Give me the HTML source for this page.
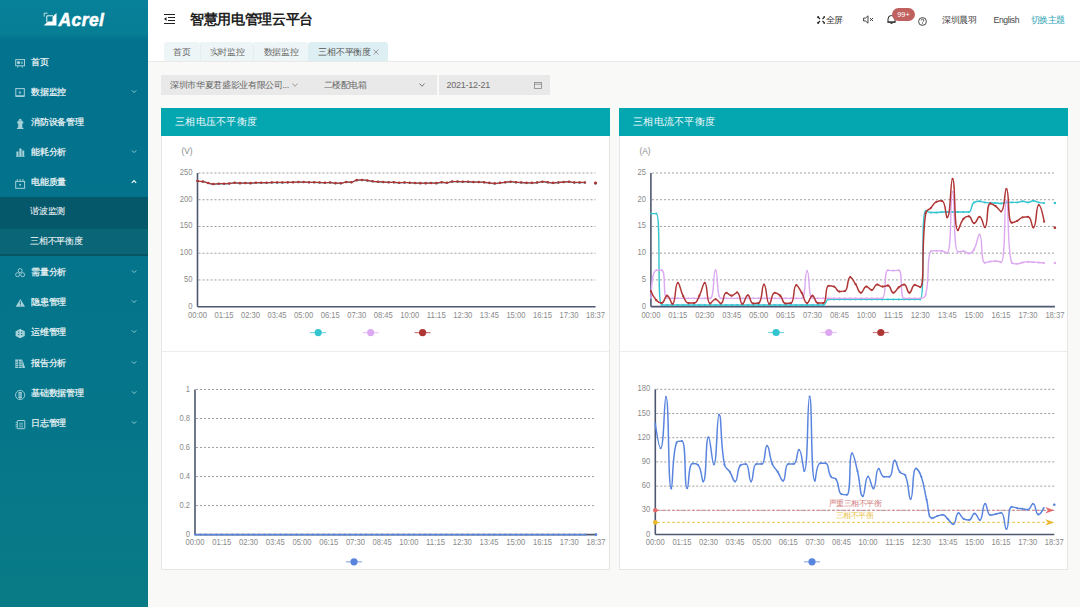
<!DOCTYPE html>
<html><head><meta charset="utf-8">
<style>
*{box-sizing:border-box;margin:0;padding:0}
html,body{width:1080px;height:607px;overflow:hidden;background:#f9f9f7;font-family:"Liberation Sans",sans-serif}
.abs{position:absolute}
#side{position:absolute;left:0;top:0;width:148px;height:607px;background:linear-gradient(180deg,#07809a 0px,#067e94 34px,#03728e 40px,#03728d 120px,#05768a 420px,#087b86 607px)}
.logo{position:absolute;left:43px;top:9.5px;color:#fff;font-weight:bold;font-style:italic;font-size:17.5px;letter-spacing:0.4px;-webkit-text-stroke:0.5px #fff}
.mi{position:absolute;left:0;width:148px;height:30px;color:#f2f8f9;font-size:9px;letter-spacing:-0.2px;line-height:30px;-webkit-text-stroke:0.2px #f2f8f9}
.mi .t{position:absolute;left:31px;top:0.2px}
.mi .ic{position:absolute;left:15px;top:10px;width:10px;height:10px}
.mi .ch{position:absolute;left:131px;top:12px;width:6px;height:5px}
.sub{position:absolute;left:0;width:148px;color:#f6fafb;font-size:9px;letter-spacing:-0.2px;-webkit-text-stroke:0.05px #f6fafb}
.sub .t{position:absolute;left:30px}
#top{position:absolute;left:148px;top:0;width:932px;height:61px;background:#fff}
.title{position:absolute;left:190px;top:11px;font-size:14px;letter-spacing:-0.35px;font-weight:bold;color:#1f1f1f}
.hd{position:absolute;top:14px;font-size:9px;letter-spacing:-0.35px;color:#333;line-height:12px}
.tab{position:absolute;top:41.5px;height:19.5px;border-radius:3px 3px 0 0;background:#eef5f7;font-size:9px;letter-spacing:-0.15px;color:#666;line-height:20px;text-align:center}
.tab.act{background:#ddeff3;color:#555}
#tabline{position:absolute;left:148px;top:61px;width:932px;height:1px;background:#e9e9e9}
.flt{position:absolute;top:74.5px;height:20px;background:#e9e9e9;font-size:9px;letter-spacing:-0.35px;color:#666;line-height:20px}
.panel{position:absolute;top:108px;height:461.5px;background:#fff;border:1px solid #e6e6e6;border-top:none}
.ph{position:absolute;left:-1px;top:0;height:27.5px;background:#04a6b0;color:#f4fbfc;font-size:10px;letter-spacing:0.25px;line-height:28px;padding-left:14px}
.pdiv{position:absolute;left:0;top:243px;height:1px;background:#ececec}
svg text.al{font-size:8.3px;fill:#8a8a8a;font-family:"Liberation Sans",sans-serif}
svg text.ml{font-size:8px;letter-spacing:-0.5px;font-family:"Liberation Sans",sans-serif}
</style></head><body>
<div id="side">
  <div class="logo"><svg width="15" height="15" viewBox="0 0 15 15" style="position:absolute;left:-0.5px;top:2.3px"><path d="M13.5 1V13.6H0.8z" fill="#fff"/><rect x="4.3" y="4.3" width="5.2" height="5.2" fill="#077e95"/><path d="M3.8 10V3.8h6.2" stroke="#fff" stroke-width="0.9" fill="none"/><path d="M1.2 4.5V1.2h3.3" stroke="#fff" stroke-width="0.9" fill="none" opacity="0.8"/></svg><span style="position:absolute;left:15.5px;top:0">Acrel</span></div>
  <div class="sub" style="top:197px;height:32px;background:#05576a;line-height:28.5px"><span class="t">谐波监测</span></div>
  <div class="sub" style="top:229px;height:25px;background:#0a6577;line-height:24px"><span class="t">三相不平衡度</span></div>
  <div class="abs" style="left:0;top:254px;width:148px;height:2px;background:#085664"></div>
  <div class="mi" style="top:47px"><span class="t">首页</span></div>
  <div class="mi" style="top:77px"><span class="t">数据监控</span></div>
  <div class="mi" style="top:107px"><span class="t">消防设备管理</span></div>
  <div class="mi" style="top:137px"><span class="t">能耗分析</span></div>
  <div class="mi" style="top:167px"><span class="t">电能质量</span></div>
  <div class="mi" style="top:257px"><span class="t">需量分析</span></div>
  <div class="mi" style="top:287px"><span class="t">隐患管理</span></div>
  <div class="mi" style="top:317px"><span class="t">运维管理</span></div>
  <div class="mi" style="top:348px"><span class="t">报告分析</span></div>
  <div class="mi" style="top:378px"><span class="t">基础数据管理</span></div>
  <div class="mi" style="top:408px"><span class="t">日志管理</span></div>
  <svg class="abs" style="left:0;top:0" width="148" height="607" viewBox="0 0 148 607">
    <g stroke="#a6d1d9" fill="none" stroke-width="1">
      <!-- home: board -->
      <rect x="15.7" y="59.6" width="8.8" height="6.2"/>
      <path d="M18.3 65.8l-0.8 1.8M21.7 65.8l0.8 1.8" stroke-width="0.9"/>
      <!-- data monitor -->
      <rect x="15.8" y="88.6" width="8.5" height="7.6"/>
      <path d="M15.8 96.1h8.5" stroke-width="1.5"/>
      <!-- calendar -->
      <rect x="15.7" y="181.4" width="8.9" height="6.9"/>
      <path d="M17.3 179v2.4M20.15 179v2.4M23 179v2.4" stroke-width="0.9"/>
      <!-- demand: circles -->
      <circle cx="20.2" cy="270.6" r="2" stroke-width="0.9"/>
      <circle cx="17.6" cy="274.7" r="2" stroke-width="0.9"/>
      <circle cx="22.7" cy="274.7" r="2" stroke-width="0.9"/>
      <!-- base data circle -->
      <circle cx="20.15" cy="395" r="4.6" stroke-width="0.9"/>
      <!-- log book -->
      <rect x="17.3" y="420.5" width="7.5" height="8.2" rx="0.6"/>
      <path d="M19 423.2h4M19 425h4M19 426.8h4" stroke-width="0.7"/>
      <path d="M16.2 422v0.9M16.2 424v0.9M16.2 426v0.9M16.2 428v0.5" stroke-width="1.1"/>
    </g>
    <g fill="#a6d1d9">
      <circle cx="18.6" cy="62.6" r="1.7"/>
      <rect x="21.4" y="61.6" width="1.2" height="2.2"/>
      <path d="M20.6 90.2l-2.3 2.6h1.6l-0.9 2.2 2.6-2.7h-1.6z"/>
      <!-- hydrant -->
      <path d="M18.7 120.2a1.5 1.5 0 0 1 3 0zM18.2 120.6h4.1v7.4h-4.1zM17.2 121.6h1v1.8h-1zM22.3 121.6h1v1.8h-1zM17 127.8h6.5v1.2h-6.5z"/>
      <!-- bars -->
      <path d="M16 156h8.6v0.8h-8.6zM16.4 151.5h2.1v4.5h-2.1zM19.3 148.4h2.3v7.6h-2.3zM22.3 150.5h1.9v5.5h-1.9z"/>
      <circle cx="20.15" cy="184.8" r="0.95"/>
      <!-- warning -->
      <path d="M20.4 298.9L25.1 306.7H15.7z"/>
      <!-- ops globe -->
      <path d="M20.2 328.9l4.6 2.4v4.6l-4.6 2.4-4.6-2.4v-4.6z"/>
      <!-- report -->
      <path d="M15.2 359.6h6.6v8.4h-6.6zM22.3 359.3l2.8 8.6h-2.8z"/>
      <!-- database -->
      <path d="M18.4 392.2q1.75-1 3.5 0v5.8q-1.75 1-3.5 0z"/>
    </g>
    <g stroke="#03728d" fill="none" stroke-width="0.7">
      <path d="M20.4 301.2v3.1M20.4 305.2v0.8" stroke-width="0.9"/>
      <path d="M18.2 332.2h1.4M20.9 332.2h1.4M18.2 334.6h1.4M20.9 334.6h1.4" stroke-width="1"/>
      <path d="M20.2 329v9" stroke="#cfe9ee" stroke-width="0.5"/>
      <path d="M15.2 362h6.6M15.2 364.3h6.6M15.2 366.4h6.6M18.5 359.6v8.4" stroke="#04748a"/>
      <path d="M18.4 394h3.5M18.4 396h3.5" stroke="#05758a" stroke-width="0.6"/>
    </g>
    <g stroke="#8fc9d3" fill="none" stroke-width="1">
      <path d="M131.9 90.4l2.2 2.2 2.2-2.2"/>
      <path d="M131.9 150.4l2.2 2.2 2.2-2.2"/>
      <path d="M131.9 270.4l2.2 2.2 2.2-2.2"/>
      <path d="M131.9 300.4l2.2 2.2 2.2-2.2"/>
      <path d="M131.9 330.4l2.2 2.2 2.2-2.2"/>
      <path d="M131.9 361.4l2.2 2.2 2.2-2.2"/>
      <path d="M131.9 391.4l2.2 2.2 2.2-2.2"/>
      <path d="M131.9 421.4l2.2 2.2 2.2-2.2"/>
    </g>
    <path d="M131.8 182.9l2.2-2.3 2.2 2.3" stroke="#f2f8f9" fill="none" stroke-width="1.2"/>
  </svg>
</div>

<div id="top"></div>
<svg class="abs" style="left:163px;top:13px" width="13" height="12" viewBox="0 0 13 12"><path d="M1 1.5h11M5 4.5h7M5 7.5h7M1 10.5h11" stroke="#222" stroke-width="1.2" fill="none"/><path d="M3.5 4L1 6l2.5 2z" fill="#222"/></svg>
<div class="title">智慧用电管理云平台</div>

<svg class="abs" style="left:816.5px;top:15.5px" width="8.5" height="8" viewBox="0 0 8.5 8"><path d="M1 1l2 2M7.5 1l-2 2M1 7l2-2M7.5 7l-2-2" stroke="#222" stroke-width="1.1"/><path d="M0.2 0.2h2.2L0.2 2.4zM8.3 0.2v2.2L6.1 0.2zM0.2 7.8v-2.2L2.4 7.8zM8.3 7.8h-2.2L8.3 5.6z" fill="#222"/></svg>
<div class="hd" style="left:825.5px">全屏</div>
<svg class="abs" style="left:863px;top:15px" width="11" height="9" viewBox="0 0 11 9"><path d="M0.6 3h2L5 0.8v7.4L2.6 6h-2z" stroke="#333" stroke-width="0.9" fill="none"/><path d="M7 3l3 3M10 3L7 6" stroke="#333" stroke-width="0.9"/></svg>
<svg class="abs" style="left:887px;top:14px" width="9" height="10" viewBox="0 0 9 10"><path d="M1 8V5a3.5 3.5 0 0 1 7 0v3zM0.3 8.2h8.4M3.5 9.3h2" stroke="#222" stroke-width="1" fill="none"/></svg>
<div class="abs" style="left:892px;top:8px;width:23px;height:13px;border-radius:7px;background:#c0605f;color:#fff;font-size:7.4px;line-height:13px;text-align:center">99+</div>
<svg class="abs" style="left:918px;top:16.5px" width="9" height="9" viewBox="0 0 9 9"><circle cx="4.5" cy="4.5" r="3.9" stroke="#333" stroke-width="0.9" fill="none"/><path d="M3.2 3.5a1.3 1.3 0 1 1 1.8 1.2c-.4.2-.5.5-.5.9" stroke="#333" stroke-width="0.8" fill="none"/><circle cx="4.5" cy="6.8" r="0.5" fill="#333"/></svg>
<div class="hd" style="left:942px;color:#444">深圳晨羽</div>
<div class="hd" style="left:993.5px;color:#444;font-size:8.6px">English</div>
<div class="hd" style="left:1030.5px;color:#2ba3b3">切换主题</div>

<div class="tab" style="left:163.5px;width:36px;padding-left:1px">首页</div>
<div class="tab" style="left:199.5px;width:53.5px;padding-left:1px;border-left:1px solid #e4edf0">实时监控</div>
<div class="tab" style="left:253px;width:54.5px;padding-left:1px;border-left:1px solid #e4edf0">数据监控</div>
<div class="tab act" style="left:308px;width:80px;text-align:left;padding-left:10px">三相不平衡度<svg style="position:absolute;left:65.3px;top:7.3px" width="6" height="6" viewBox="0 0 6 6"><path d="M0.5 0.5l5 5M5.5 0.5l-5 5" stroke="#8a8a8a" stroke-width="0.8"/></svg></div>
<div id="tabline"></div>

<div class="flt" style="left:161px;width:276px"><span class="abs" style="left:9px;top:0">深圳市华夏君盛影业有限公司...</span><svg class="abs" style="left:130.5px;top:8px" width="6" height="4" viewBox="0 0 6 4"><path d="M0.5 0.5L3 3.3 5.5 0.5" stroke="#888" fill="none" stroke-width="0.8"/></svg><span class="abs" style="left:162.5px;top:0">二楼配电箱</span><svg class="abs" style="left:258px;top:8px" width="6" height="4" viewBox="0 0 6 4"><path d="M0.5 0.5L3 3.3 5.5 0.5" stroke="#666" fill="none" stroke-width="0.9"/></svg></div>
<div class="flt" style="left:439px;width:110.5px"><span class="abs" style="left:7.5px;top:0;color:#6a6a6a;letter-spacing:-0.25px">2021-12-21</span><svg class="abs" style="left:95px;top:7px" width="8" height="7" viewBox="0 0 8 7"><rect x="0.5" y="0.5" width="7" height="6" stroke="#888" fill="none" stroke-width="0.8"/><path d="M0.5 2.2h7" stroke="#888" stroke-width="0.8"/></svg></div>

<div class="panel" style="left:161px;width:448.5px"><div class="ph" style="width:448.5px">三相电压不平衡度</div><div class="pdiv" style="width:446.5px"></div></div>
<div class="panel" style="left:619px;width:449px"><div class="ph" style="width:449px">三相电流不平衡度</div><div class="pdiv" style="width:447px"></div></div>

<svg class="abs" style="left:0;top:0" width="1080" height="607" viewBox="0 0 1080 607">
<line x1="198.50" y1="173.00" x2="595.50" y2="173.00" stroke="#9c9c9c" stroke-width="1" stroke-dasharray="2 2"/>
<text x="192.50" y="175.00" text-anchor="end" class="al" textLength="12.68" lengthAdjust="spacingAndGlyphs">250</text>
<line x1="198.50" y1="199.74" x2="595.50" y2="199.74" stroke="#9c9c9c" stroke-width="1" stroke-dasharray="2 2"/>
<text x="192.50" y="201.74" text-anchor="end" class="al" textLength="12.68" lengthAdjust="spacingAndGlyphs">200</text>
<line x1="198.50" y1="226.48" x2="595.50" y2="226.48" stroke="#9c9c9c" stroke-width="1" stroke-dasharray="2 2"/>
<text x="192.50" y="228.48" text-anchor="end" class="al" textLength="12.68" lengthAdjust="spacingAndGlyphs">150</text>
<line x1="198.50" y1="253.22" x2="595.50" y2="253.22" stroke="#9c9c9c" stroke-width="1" stroke-dasharray="2 2"/>
<text x="192.50" y="255.22" text-anchor="end" class="al" textLength="12.68" lengthAdjust="spacingAndGlyphs">100</text>
<line x1="198.50" y1="279.96" x2="595.50" y2="279.96" stroke="#9c9c9c" stroke-width="1" stroke-dasharray="2 2"/>
<text x="192.50" y="281.96" text-anchor="end" class="al" textLength="8.45" lengthAdjust="spacingAndGlyphs">50</text>
<text x="192.50" y="308.70" text-anchor="end" class="al" textLength="4.23" lengthAdjust="spacingAndGlyphs">0</text>
<line x1="197.50" y1="173.00" x2="197.50" y2="306.70" stroke="#4d5770" stroke-width="1.6"/>
<line x1="197.50" y1="306.70" x2="595.50" y2="306.70" stroke="#4d5770" stroke-width="1.6"/>
<text x="197.50" y="317.80" text-anchor="middle" class="al" textLength="19.02" lengthAdjust="spacingAndGlyphs">00:00</text>
<text x="224.03" y="317.80" text-anchor="middle" class="al" textLength="19.02" lengthAdjust="spacingAndGlyphs">01:15</text>
<text x="250.57" y="317.80" text-anchor="middle" class="al" textLength="19.02" lengthAdjust="spacingAndGlyphs">02:30</text>
<text x="277.10" y="317.80" text-anchor="middle" class="al" textLength="19.02" lengthAdjust="spacingAndGlyphs">03:45</text>
<text x="303.63" y="317.80" text-anchor="middle" class="al" textLength="19.02" lengthAdjust="spacingAndGlyphs">05:00</text>
<text x="330.17" y="317.80" text-anchor="middle" class="al" textLength="19.02" lengthAdjust="spacingAndGlyphs">06:15</text>
<text x="356.70" y="317.80" text-anchor="middle" class="al" textLength="19.02" lengthAdjust="spacingAndGlyphs">07:30</text>
<text x="383.23" y="317.80" text-anchor="middle" class="al" textLength="19.02" lengthAdjust="spacingAndGlyphs">08:45</text>
<text x="409.77" y="317.80" text-anchor="middle" class="al" textLength="19.02" lengthAdjust="spacingAndGlyphs">10:00</text>
<text x="436.30" y="317.80" text-anchor="middle" class="al" textLength="19.02" lengthAdjust="spacingAndGlyphs">11:15</text>
<text x="462.83" y="317.80" text-anchor="middle" class="al" textLength="19.02" lengthAdjust="spacingAndGlyphs">12:30</text>
<text x="489.37" y="317.80" text-anchor="middle" class="al" textLength="19.02" lengthAdjust="spacingAndGlyphs">13:45</text>
<text x="515.90" y="317.80" text-anchor="middle" class="al" textLength="19.02" lengthAdjust="spacingAndGlyphs">15:00</text>
<text x="542.43" y="317.80" text-anchor="middle" class="al" textLength="19.02" lengthAdjust="spacingAndGlyphs">16:15</text>
<text x="568.97" y="317.80" text-anchor="middle" class="al" textLength="19.02" lengthAdjust="spacingAndGlyphs">17:30</text>
<text x="595.50" y="317.80" text-anchor="middle" class="al" textLength="19.02" lengthAdjust="spacingAndGlyphs">18:37</text>
<text x="187.00" y="153.80" text-anchor="middle" class="al">(V)</text>
<path d="M197.50 181.24 C197.50 181.24 200.19 181.26 202.81 181.72 C205.50 182.19 205.45 182.48 208.11 183.11 C210.75 183.73 210.74 184.23 213.42 184.23 C216.05 184.23 216.07 183.86 218.73 183.86 C221.38 183.86 221.38 183.86 224.03 183.86 C226.69 183.86 226.69 183.82 229.34 183.59 C232.00 183.36 231.99 182.95 234.65 182.95 C237.29 182.95 237.30 183.32 239.95 183.32 C242.60 183.32 242.61 183.11 245.26 183.11 C247.91 183.11 247.92 183.32 250.57 183.32 C253.22 183.32 253.21 182.84 255.87 182.84 C258.52 182.84 258.53 182.84 261.18 182.84 C263.83 182.84 263.83 182.84 266.49 182.84 C269.14 182.84 269.14 182.63 271.79 182.63 C274.45 182.63 274.45 182.63 277.10 182.63 C279.75 182.63 279.75 182.63 282.41 182.63 C285.06 182.63 285.06 182.59 287.71 182.52 C290.37 182.45 290.37 182.44 293.02 182.36 C295.67 182.28 295.67 182.20 298.33 182.20 C300.98 182.20 300.98 182.20 303.63 182.20 C306.29 182.20 306.28 182.47 308.94 182.47 C311.59 182.47 311.59 182.47 314.25 182.47 C316.90 182.47 316.90 182.53 319.55 182.63 C322.21 182.72 322.21 182.84 324.86 182.84 C327.51 182.84 327.52 182.63 330.17 182.63 C332.83 182.63 332.81 183.27 335.47 183.32 C338.12 183.38 338.16 183.38 340.78 183.38 C343.47 183.38 343.40 182.20 346.09 182.20 C348.71 182.20 348.83 182.36 351.39 182.36 C354.14 182.36 353.96 180.56 356.70 180.33 C359.26 180.11 359.36 180.11 362.01 180.11 C364.66 180.11 364.67 180.26 367.31 180.59 C369.98 180.93 369.95 181.13 372.62 181.45 C375.26 181.77 375.27 181.69 377.93 181.88 C380.58 182.06 380.58 182.05 383.23 182.20 C385.89 182.35 385.88 182.47 388.54 182.47 C391.19 182.47 391.20 182.47 393.85 182.47 C396.50 182.47 396.50 182.84 399.15 182.84 C401.80 182.84 401.81 182.63 404.46 182.63 C407.11 182.63 407.11 182.72 409.77 182.84 C412.42 182.96 412.42 182.99 415.07 183.11 C417.73 183.23 417.73 183.32 420.38 183.32 C423.03 183.32 423.03 183.32 425.69 183.32 C428.34 183.32 428.34 183.11 430.99 183.11 C433.65 183.11 433.66 183.32 436.30 183.32 C438.97 183.32 438.94 182.47 441.61 182.47 C444.25 182.47 444.29 182.84 446.91 182.84 C449.59 182.84 449.54 181.72 452.22 181.72 C454.84 181.72 454.87 181.72 457.53 181.72 C460.18 181.72 460.18 181.88 462.83 181.88 C465.49 181.88 465.49 181.88 468.14 181.88 C470.80 181.88 470.79 182.20 473.45 182.20 C476.10 182.20 476.10 182.20 478.75 182.20 C481.41 182.20 481.41 182.21 484.06 182.41 C486.72 182.61 486.71 182.72 489.37 183.00 C492.02 183.28 492.02 183.54 494.67 183.54 C497.33 183.54 497.33 183.28 499.98 183.00 C502.63 182.72 502.63 182.69 505.29 182.41 C507.94 182.13 507.94 181.88 510.59 181.88 C513.25 181.88 513.24 182.22 515.90 182.41 C518.55 182.60 518.56 182.48 521.21 182.63 C523.86 182.77 523.86 183.00 526.51 183.00 C529.16 183.00 529.17 183.00 531.82 183.00 C534.48 183.00 534.48 182.91 537.13 182.63 C539.79 182.34 539.77 181.88 542.43 181.88 C545.08 181.88 545.09 182.13 547.74 182.41 C550.39 182.69 550.39 183.00 553.05 183.00 C555.70 183.00 555.70 182.83 558.35 182.63 C561.01 182.43 561.00 182.39 563.66 182.20 C566.31 182.01 566.32 181.88 568.97 181.88 C571.63 181.88 571.61 182.63 574.27 182.63 C576.91 182.63 576.93 182.63 579.58 182.63 C582.23 182.63 584.89 182.63 584.89 182.63" fill="none" stroke="#33c4cf" stroke-width="1.2" stroke-linejoin="round"/>
<circle cx="197.50" cy="181.24" r="1.1" fill="#33c4cf"/>
<circle cx="202.81" cy="181.72" r="1.1" fill="#33c4cf"/>
<circle cx="208.11" cy="183.11" r="1.1" fill="#33c4cf"/>
<circle cx="213.42" cy="184.23" r="1.1" fill="#33c4cf"/>
<circle cx="218.73" cy="183.86" r="1.1" fill="#33c4cf"/>
<circle cx="224.03" cy="183.86" r="1.1" fill="#33c4cf"/>
<circle cx="229.34" cy="183.59" r="1.1" fill="#33c4cf"/>
<circle cx="234.65" cy="182.95" r="1.1" fill="#33c4cf"/>
<circle cx="239.95" cy="183.32" r="1.1" fill="#33c4cf"/>
<circle cx="245.26" cy="183.11" r="1.1" fill="#33c4cf"/>
<circle cx="250.57" cy="183.32" r="1.1" fill="#33c4cf"/>
<circle cx="255.87" cy="182.84" r="1.1" fill="#33c4cf"/>
<circle cx="261.18" cy="182.84" r="1.1" fill="#33c4cf"/>
<circle cx="266.49" cy="182.84" r="1.1" fill="#33c4cf"/>
<circle cx="271.79" cy="182.63" r="1.1" fill="#33c4cf"/>
<circle cx="277.10" cy="182.63" r="1.1" fill="#33c4cf"/>
<circle cx="282.41" cy="182.63" r="1.1" fill="#33c4cf"/>
<circle cx="287.71" cy="182.52" r="1.1" fill="#33c4cf"/>
<circle cx="293.02" cy="182.36" r="1.1" fill="#33c4cf"/>
<circle cx="298.33" cy="182.20" r="1.1" fill="#33c4cf"/>
<circle cx="303.63" cy="182.20" r="1.1" fill="#33c4cf"/>
<circle cx="308.94" cy="182.47" r="1.1" fill="#33c4cf"/>
<circle cx="314.25" cy="182.47" r="1.1" fill="#33c4cf"/>
<circle cx="319.55" cy="182.63" r="1.1" fill="#33c4cf"/>
<circle cx="324.86" cy="182.84" r="1.1" fill="#33c4cf"/>
<circle cx="330.17" cy="182.63" r="1.1" fill="#33c4cf"/>
<circle cx="335.47" cy="183.32" r="1.1" fill="#33c4cf"/>
<circle cx="340.78" cy="183.38" r="1.1" fill="#33c4cf"/>
<circle cx="346.09" cy="182.20" r="1.1" fill="#33c4cf"/>
<circle cx="351.39" cy="182.36" r="1.1" fill="#33c4cf"/>
<circle cx="356.70" cy="180.33" r="1.1" fill="#33c4cf"/>
<circle cx="362.01" cy="180.11" r="1.1" fill="#33c4cf"/>
<circle cx="367.31" cy="180.59" r="1.1" fill="#33c4cf"/>
<circle cx="372.62" cy="181.45" r="1.1" fill="#33c4cf"/>
<circle cx="377.93" cy="181.88" r="1.1" fill="#33c4cf"/>
<circle cx="383.23" cy="182.20" r="1.1" fill="#33c4cf"/>
<circle cx="388.54" cy="182.47" r="1.1" fill="#33c4cf"/>
<circle cx="393.85" cy="182.47" r="1.1" fill="#33c4cf"/>
<circle cx="399.15" cy="182.84" r="1.1" fill="#33c4cf"/>
<circle cx="404.46" cy="182.63" r="1.1" fill="#33c4cf"/>
<circle cx="409.77" cy="182.84" r="1.1" fill="#33c4cf"/>
<circle cx="415.07" cy="183.11" r="1.1" fill="#33c4cf"/>
<circle cx="420.38" cy="183.32" r="1.1" fill="#33c4cf"/>
<circle cx="425.69" cy="183.32" r="1.1" fill="#33c4cf"/>
<circle cx="430.99" cy="183.11" r="1.1" fill="#33c4cf"/>
<circle cx="436.30" cy="183.32" r="1.1" fill="#33c4cf"/>
<circle cx="441.61" cy="182.47" r="1.1" fill="#33c4cf"/>
<circle cx="446.91" cy="182.84" r="1.1" fill="#33c4cf"/>
<circle cx="452.22" cy="181.72" r="1.1" fill="#33c4cf"/>
<circle cx="457.53" cy="181.72" r="1.1" fill="#33c4cf"/>
<circle cx="462.83" cy="181.88" r="1.1" fill="#33c4cf"/>
<circle cx="468.14" cy="181.88" r="1.1" fill="#33c4cf"/>
<circle cx="473.45" cy="182.20" r="1.1" fill="#33c4cf"/>
<circle cx="478.75" cy="182.20" r="1.1" fill="#33c4cf"/>
<circle cx="484.06" cy="182.41" r="1.1" fill="#33c4cf"/>
<circle cx="489.37" cy="183.00" r="1.1" fill="#33c4cf"/>
<circle cx="494.67" cy="183.54" r="1.1" fill="#33c4cf"/>
<circle cx="499.98" cy="183.00" r="1.1" fill="#33c4cf"/>
<circle cx="505.29" cy="182.41" r="1.1" fill="#33c4cf"/>
<circle cx="510.59" cy="181.88" r="1.1" fill="#33c4cf"/>
<circle cx="515.90" cy="182.41" r="1.1" fill="#33c4cf"/>
<circle cx="521.21" cy="182.63" r="1.1" fill="#33c4cf"/>
<circle cx="526.51" cy="183.00" r="1.1" fill="#33c4cf"/>
<circle cx="531.82" cy="183.00" r="1.1" fill="#33c4cf"/>
<circle cx="537.13" cy="182.63" r="1.1" fill="#33c4cf"/>
<circle cx="542.43" cy="181.88" r="1.1" fill="#33c4cf"/>
<circle cx="547.74" cy="182.41" r="1.1" fill="#33c4cf"/>
<circle cx="553.05" cy="183.00" r="1.1" fill="#33c4cf"/>
<circle cx="558.35" cy="182.63" r="1.1" fill="#33c4cf"/>
<circle cx="563.66" cy="182.20" r="1.1" fill="#33c4cf"/>
<circle cx="568.97" cy="181.88" r="1.1" fill="#33c4cf"/>
<circle cx="574.27" cy="182.63" r="1.1" fill="#33c4cf"/>
<circle cx="579.58" cy="182.63" r="1.1" fill="#33c4cf"/>
<circle cx="584.89" cy="182.63" r="1.1" fill="#33c4cf"/>
<circle cx="595.50" cy="183.21" r="1.1" fill="#33c4cf"/>
<circle cx="595.50" cy="183.21" r="1.3" fill="#33c4cf"/>
<path d="M197.50 181.08 C197.50 181.08 200.19 181.10 202.81 181.56 C205.50 182.03 205.45 182.32 208.11 182.95 C210.75 183.57 210.74 184.07 213.42 184.07 C216.05 184.07 216.07 183.70 218.73 183.70 C221.38 183.70 221.38 183.70 224.03 183.70 C226.69 183.70 226.69 183.66 229.34 183.43 C232.00 183.20 231.99 182.79 234.65 182.79 C237.29 182.79 237.30 183.16 239.95 183.16 C242.60 183.16 242.61 182.95 245.26 182.95 C247.91 182.95 247.92 183.16 250.57 183.16 C253.22 183.16 253.21 182.68 255.87 182.68 C258.52 182.68 258.53 182.68 261.18 182.68 C263.83 182.68 263.83 182.68 266.49 182.68 C269.14 182.68 269.14 182.47 271.79 182.47 C274.45 182.47 274.45 182.47 277.10 182.47 C279.75 182.47 279.75 182.47 282.41 182.47 C285.06 182.47 285.06 182.43 287.71 182.36 C290.37 182.29 290.37 182.28 293.02 182.20 C295.67 182.12 295.67 182.04 298.33 182.04 C300.98 182.04 300.98 182.04 303.63 182.04 C306.29 182.04 306.28 182.31 308.94 182.31 C311.59 182.31 311.59 182.31 314.25 182.31 C316.90 182.31 316.90 182.37 319.55 182.47 C322.21 182.56 322.21 182.68 324.86 182.68 C327.51 182.68 327.52 182.47 330.17 182.47 C332.83 182.47 332.81 183.11 335.47 183.16 C338.12 183.21 338.16 183.21 340.78 183.21 C343.47 183.21 343.40 182.04 346.09 182.04 C348.71 182.04 348.83 182.20 351.39 182.20 C354.14 182.20 353.96 180.40 356.70 180.17 C359.26 179.95 359.36 179.95 362.01 179.95 C364.66 179.95 364.67 180.10 367.31 180.43 C369.98 180.77 369.95 180.97 372.62 181.29 C375.26 181.61 375.27 181.53 377.93 181.72 C380.58 181.90 380.58 181.89 383.23 182.04 C385.89 182.19 385.88 182.31 388.54 182.31 C391.19 182.31 391.20 182.31 393.85 182.31 C396.50 182.31 396.50 182.68 399.15 182.68 C401.80 182.68 401.81 182.47 404.46 182.47 C407.11 182.47 407.11 182.56 409.77 182.68 C412.42 182.80 412.42 182.83 415.07 182.95 C417.73 183.07 417.73 183.16 420.38 183.16 C423.03 183.16 423.03 183.16 425.69 183.16 C428.34 183.16 428.34 182.95 430.99 182.95 C433.65 182.95 433.66 183.16 436.30 183.16 C438.97 183.16 438.94 182.31 441.61 182.31 C444.25 182.31 444.29 182.68 446.91 182.68 C449.59 182.68 449.54 181.56 452.22 181.56 C454.84 181.56 454.87 181.56 457.53 181.56 C460.18 181.56 460.18 181.72 462.83 181.72 C465.49 181.72 465.49 181.72 468.14 181.72 C470.80 181.72 470.79 182.04 473.45 182.04 C476.10 182.04 476.10 182.04 478.75 182.04 C481.41 182.04 481.41 182.05 484.06 182.25 C486.72 182.45 486.71 182.56 489.37 182.84 C492.02 183.12 492.02 183.38 494.67 183.38 C497.33 183.38 497.33 183.12 499.98 182.84 C502.63 182.56 502.63 182.53 505.29 182.25 C507.94 181.97 507.94 181.72 510.59 181.72 C513.25 181.72 513.24 182.06 515.90 182.25 C518.55 182.44 518.56 182.32 521.21 182.47 C523.86 182.61 523.86 182.84 526.51 182.84 C529.16 182.84 529.17 182.84 531.82 182.84 C534.48 182.84 534.48 182.75 537.13 182.47 C539.79 182.18 539.77 181.72 542.43 181.72 C545.08 181.72 545.09 181.97 547.74 182.25 C550.39 182.53 550.39 182.84 553.05 182.84 C555.70 182.84 555.70 182.67 558.35 182.47 C561.01 182.27 561.00 182.23 563.66 182.04 C566.31 181.85 566.32 181.72 568.97 181.72 C571.63 181.72 571.61 182.47 574.27 182.47 C576.91 182.47 576.93 182.47 579.58 182.47 C582.23 182.47 584.89 182.47 584.89 182.47" fill="none" stroke="#b03636" stroke-width="1.3" stroke-linejoin="round"/>
<circle cx="197.50" cy="181.08" r="1.3" fill="#b03636"/>
<circle cx="202.81" cy="181.56" r="1.3" fill="#b03636"/>
<circle cx="208.11" cy="182.95" r="1.3" fill="#b03636"/>
<circle cx="213.42" cy="184.07" r="1.3" fill="#b03636"/>
<circle cx="218.73" cy="183.70" r="1.3" fill="#b03636"/>
<circle cx="224.03" cy="183.70" r="1.3" fill="#b03636"/>
<circle cx="229.34" cy="183.43" r="1.3" fill="#b03636"/>
<circle cx="234.65" cy="182.79" r="1.3" fill="#b03636"/>
<circle cx="239.95" cy="183.16" r="1.3" fill="#b03636"/>
<circle cx="245.26" cy="182.95" r="1.3" fill="#b03636"/>
<circle cx="250.57" cy="183.16" r="1.3" fill="#b03636"/>
<circle cx="255.87" cy="182.68" r="1.3" fill="#b03636"/>
<circle cx="261.18" cy="182.68" r="1.3" fill="#b03636"/>
<circle cx="266.49" cy="182.68" r="1.3" fill="#b03636"/>
<circle cx="271.79" cy="182.47" r="1.3" fill="#b03636"/>
<circle cx="277.10" cy="182.47" r="1.3" fill="#b03636"/>
<circle cx="282.41" cy="182.47" r="1.3" fill="#b03636"/>
<circle cx="287.71" cy="182.36" r="1.3" fill="#b03636"/>
<circle cx="293.02" cy="182.20" r="1.3" fill="#b03636"/>
<circle cx="298.33" cy="182.04" r="1.3" fill="#b03636"/>
<circle cx="303.63" cy="182.04" r="1.3" fill="#b03636"/>
<circle cx="308.94" cy="182.31" r="1.3" fill="#b03636"/>
<circle cx="314.25" cy="182.31" r="1.3" fill="#b03636"/>
<circle cx="319.55" cy="182.47" r="1.3" fill="#b03636"/>
<circle cx="324.86" cy="182.68" r="1.3" fill="#b03636"/>
<circle cx="330.17" cy="182.47" r="1.3" fill="#b03636"/>
<circle cx="335.47" cy="183.16" r="1.3" fill="#b03636"/>
<circle cx="340.78" cy="183.21" r="1.3" fill="#b03636"/>
<circle cx="346.09" cy="182.04" r="1.3" fill="#b03636"/>
<circle cx="351.39" cy="182.20" r="1.3" fill="#b03636"/>
<circle cx="356.70" cy="180.17" r="1.3" fill="#b03636"/>
<circle cx="362.01" cy="179.95" r="1.3" fill="#b03636"/>
<circle cx="367.31" cy="180.43" r="1.3" fill="#b03636"/>
<circle cx="372.62" cy="181.29" r="1.3" fill="#b03636"/>
<circle cx="377.93" cy="181.72" r="1.3" fill="#b03636"/>
<circle cx="383.23" cy="182.04" r="1.3" fill="#b03636"/>
<circle cx="388.54" cy="182.31" r="1.3" fill="#b03636"/>
<circle cx="393.85" cy="182.31" r="1.3" fill="#b03636"/>
<circle cx="399.15" cy="182.68" r="1.3" fill="#b03636"/>
<circle cx="404.46" cy="182.47" r="1.3" fill="#b03636"/>
<circle cx="409.77" cy="182.68" r="1.3" fill="#b03636"/>
<circle cx="415.07" cy="182.95" r="1.3" fill="#b03636"/>
<circle cx="420.38" cy="183.16" r="1.3" fill="#b03636"/>
<circle cx="425.69" cy="183.16" r="1.3" fill="#b03636"/>
<circle cx="430.99" cy="182.95" r="1.3" fill="#b03636"/>
<circle cx="436.30" cy="183.16" r="1.3" fill="#b03636"/>
<circle cx="441.61" cy="182.31" r="1.3" fill="#b03636"/>
<circle cx="446.91" cy="182.68" r="1.3" fill="#b03636"/>
<circle cx="452.22" cy="181.56" r="1.3" fill="#b03636"/>
<circle cx="457.53" cy="181.56" r="1.3" fill="#b03636"/>
<circle cx="462.83" cy="181.72" r="1.3" fill="#b03636"/>
<circle cx="468.14" cy="181.72" r="1.3" fill="#b03636"/>
<circle cx="473.45" cy="182.04" r="1.3" fill="#b03636"/>
<circle cx="478.75" cy="182.04" r="1.3" fill="#b03636"/>
<circle cx="484.06" cy="182.25" r="1.3" fill="#b03636"/>
<circle cx="489.37" cy="182.84" r="1.3" fill="#b03636"/>
<circle cx="494.67" cy="183.38" r="1.3" fill="#b03636"/>
<circle cx="499.98" cy="182.84" r="1.3" fill="#b03636"/>
<circle cx="505.29" cy="182.25" r="1.3" fill="#b03636"/>
<circle cx="510.59" cy="181.72" r="1.3" fill="#b03636"/>
<circle cx="515.90" cy="182.25" r="1.3" fill="#b03636"/>
<circle cx="521.21" cy="182.47" r="1.3" fill="#b03636"/>
<circle cx="526.51" cy="182.84" r="1.3" fill="#b03636"/>
<circle cx="531.82" cy="182.84" r="1.3" fill="#b03636"/>
<circle cx="537.13" cy="182.47" r="1.3" fill="#b03636"/>
<circle cx="542.43" cy="181.72" r="1.3" fill="#b03636"/>
<circle cx="547.74" cy="182.25" r="1.3" fill="#b03636"/>
<circle cx="553.05" cy="182.84" r="1.3" fill="#b03636"/>
<circle cx="558.35" cy="182.47" r="1.3" fill="#b03636"/>
<circle cx="563.66" cy="182.04" r="1.3" fill="#b03636"/>
<circle cx="568.97" cy="181.72" r="1.3" fill="#b03636"/>
<circle cx="574.27" cy="182.47" r="1.3" fill="#b03636"/>
<circle cx="579.58" cy="182.47" r="1.3" fill="#b03636"/>
<circle cx="584.89" cy="182.47" r="1.3" fill="#b03636"/>
<circle cx="595.50" cy="183.05" r="1.3" fill="#b03636"/>
<circle cx="595.50" cy="183.05" r="1.5" fill="#b03636"/>
<line x1="310.2" y1="332.6" x2="326.2" y2="332.6" stroke="#33c4cf" stroke-width="1.2" opacity="0.65"/><circle cx="318.2" cy="332.6" r="3.6" fill="#33c4cf"/><line x1="362.7" y1="332.6" x2="378.7" y2="332.6" stroke="#dca9f1" stroke-width="1.2" opacity="0.65"/><circle cx="370.7" cy="332.6" r="3.6" fill="#dca9f1"/><line x1="414.6" y1="332.6" x2="430.6" y2="332.6" stroke="#b03636" stroke-width="1.2" opacity="0.65"/><circle cx="422.6" cy="332.6" r="3.6" fill="#b03636"/>
<line x1="651.90" y1="173.00" x2="1054.90" y2="173.00" stroke="#9c9c9c" stroke-width="1" stroke-dasharray="2 2"/>
<text x="645.90" y="175.00" text-anchor="end" class="al" textLength="8.45" lengthAdjust="spacingAndGlyphs">25</text>
<line x1="651.90" y1="199.72" x2="1054.90" y2="199.72" stroke="#9c9c9c" stroke-width="1" stroke-dasharray="2 2"/>
<text x="645.90" y="201.72" text-anchor="end" class="al" textLength="8.45" lengthAdjust="spacingAndGlyphs">20</text>
<line x1="651.90" y1="226.44" x2="1054.90" y2="226.44" stroke="#9c9c9c" stroke-width="1" stroke-dasharray="2 2"/>
<text x="645.90" y="228.44" text-anchor="end" class="al" textLength="8.45" lengthAdjust="spacingAndGlyphs">15</text>
<line x1="651.90" y1="253.16" x2="1054.90" y2="253.16" stroke="#9c9c9c" stroke-width="1" stroke-dasharray="2 2"/>
<text x="645.90" y="255.16" text-anchor="end" class="al" textLength="8.45" lengthAdjust="spacingAndGlyphs">10</text>
<line x1="651.90" y1="279.88" x2="1054.90" y2="279.88" stroke="#9c9c9c" stroke-width="1" stroke-dasharray="2 2"/>
<text x="645.90" y="281.88" text-anchor="end" class="al" textLength="4.23" lengthAdjust="spacingAndGlyphs">5</text>
<text x="645.90" y="308.60" text-anchor="end" class="al" textLength="4.23" lengthAdjust="spacingAndGlyphs">0</text>
<line x1="650.90" y1="173.00" x2="650.90" y2="306.60" stroke="#4d5770" stroke-width="1.6"/>
<line x1="650.90" y1="306.60" x2="1054.90" y2="306.60" stroke="#4d5770" stroke-width="1.6"/>
<text x="650.90" y="317.80" text-anchor="middle" class="al" textLength="19.02" lengthAdjust="spacingAndGlyphs">00:00</text>
<text x="677.83" y="317.80" text-anchor="middle" class="al" textLength="19.02" lengthAdjust="spacingAndGlyphs">01:15</text>
<text x="704.77" y="317.80" text-anchor="middle" class="al" textLength="19.02" lengthAdjust="spacingAndGlyphs">02:30</text>
<text x="731.70" y="317.80" text-anchor="middle" class="al" textLength="19.02" lengthAdjust="spacingAndGlyphs">03:45</text>
<text x="758.63" y="317.80" text-anchor="middle" class="al" textLength="19.02" lengthAdjust="spacingAndGlyphs">05:00</text>
<text x="785.57" y="317.80" text-anchor="middle" class="al" textLength="19.02" lengthAdjust="spacingAndGlyphs">06:15</text>
<text x="812.50" y="317.80" text-anchor="middle" class="al" textLength="19.02" lengthAdjust="spacingAndGlyphs">07:30</text>
<text x="839.43" y="317.80" text-anchor="middle" class="al" textLength="19.02" lengthAdjust="spacingAndGlyphs">08:45</text>
<text x="866.37" y="317.80" text-anchor="middle" class="al" textLength="19.02" lengthAdjust="spacingAndGlyphs">10:00</text>
<text x="893.30" y="317.80" text-anchor="middle" class="al" textLength="19.02" lengthAdjust="spacingAndGlyphs">11:15</text>
<text x="920.23" y="317.80" text-anchor="middle" class="al" textLength="19.02" lengthAdjust="spacingAndGlyphs">12:30</text>
<text x="947.17" y="317.80" text-anchor="middle" class="al" textLength="19.02" lengthAdjust="spacingAndGlyphs">13:45</text>
<text x="974.10" y="317.80" text-anchor="middle" class="al" textLength="19.02" lengthAdjust="spacingAndGlyphs">15:00</text>
<text x="1001.03" y="317.80" text-anchor="middle" class="al" textLength="19.02" lengthAdjust="spacingAndGlyphs">16:15</text>
<text x="1027.97" y="317.80" text-anchor="middle" class="al" textLength="19.02" lengthAdjust="spacingAndGlyphs">17:30</text>
<text x="1054.90" y="317.80" text-anchor="middle" class="al" textLength="19.02" lengthAdjust="spacingAndGlyphs">18:37</text>
<text x="645.00" y="153.80" text-anchor="middle" class="al">(A)</text>
<path d="M650.90 213.61 C650.90 213.61 655.99 213.61 656.29 213.61 C661.37 213.61 656.59 305.00 661.67 305.00 C661.97 305.00 664.37 305.00 667.06 305.00 C669.75 305.00 669.75 305.00 672.45 305.00 C675.14 305.00 675.14 305.00 677.83 305.00 C680.53 305.00 680.53 305.00 683.22 305.00 C685.91 305.00 685.91 305.00 688.61 305.00 C691.30 305.00 691.30 305.00 693.99 305.00 C696.69 305.00 696.69 305.00 699.38 305.00 C702.07 305.00 702.07 305.00 704.77 305.00 C707.46 305.00 707.46 305.00 710.15 305.00 C712.85 305.00 712.85 305.00 715.54 305.00 C718.23 305.00 718.23 305.00 720.93 305.00 C723.62 305.00 723.62 305.00 726.31 305.00 C729.01 305.00 729.01 305.00 731.70 305.00 C734.39 305.00 734.39 305.00 737.09 305.00 C739.78 305.00 739.78 305.00 742.47 305.00 C745.17 305.00 745.17 305.00 747.86 305.00 C750.55 305.00 750.55 305.00 753.25 305.00 C755.94 305.00 755.94 305.00 758.63 305.00 C761.33 305.00 761.33 305.00 764.02 305.00 C766.71 305.00 766.71 305.00 769.41 305.00 C772.10 305.00 772.10 305.00 774.79 305.00 C777.49 305.00 777.49 305.00 780.18 305.00 C782.87 305.00 782.87 305.00 785.57 305.00 C788.26 305.00 788.26 305.00 790.95 305.00 C793.65 305.00 793.65 305.00 796.34 305.00 C799.03 305.00 799.03 305.00 801.73 305.00 C804.42 305.00 804.42 305.00 807.11 305.00 C809.81 305.00 809.81 305.00 812.50 305.00 C815.19 305.00 815.19 305.00 817.89 305.00 C820.58 305.00 821.07 305.00 823.27 305.00 C826.46 305.00 825.48 299.39 828.66 299.39 C830.86 299.39 831.35 299.39 834.05 299.39 C836.74 299.39 836.74 299.39 839.43 299.39 C842.13 299.39 842.13 299.39 844.82 299.39 C847.51 299.39 847.51 299.39 850.21 299.39 C852.90 299.39 852.90 299.39 855.59 299.39 C858.29 299.39 858.29 299.39 860.98 299.39 C863.67 299.39 863.67 299.39 866.37 299.39 C869.06 299.39 869.06 299.39 871.75 299.39 C874.45 299.39 874.45 299.39 877.14 299.39 C879.83 299.39 879.83 299.39 882.53 299.39 C885.22 299.39 885.22 299.39 887.91 299.39 C890.61 299.39 890.61 299.39 893.30 299.39 C895.99 299.39 895.99 299.39 898.69 299.39 C901.38 299.39 901.38 299.39 904.07 299.39 C906.77 299.39 906.77 299.39 909.46 299.39 C912.15 299.39 912.15 299.39 914.85 299.39 C917.54 299.39 919.92 299.39 920.23 299.39 C925.31 299.39 920.55 210.94 925.62 210.94 C925.94 210.94 928.26 212.55 931.01 212.55 C933.64 212.55 933.71 212.55 936.39 212.55 C939.09 212.55 939.08 212.01 941.78 212.01 C944.47 212.01 944.47 212.01 947.17 212.01 C949.86 212.01 949.86 212.01 952.55 212.01 C955.25 212.01 955.25 212.01 957.94 212.01 C960.63 212.01 960.63 212.01 963.33 212.01 C966.02 212.01 966.95 212.01 968.71 212.01 C972.33 212.01 970.50 204.54 974.10 202.39 C975.89 201.32 976.79 201.32 979.49 201.32 C982.18 201.32 982.16 201.99 984.87 202.39 C987.55 202.79 987.56 202.93 990.26 202.93 C992.95 202.93 992.96 202.93 995.65 202.93 C998.35 202.93 998.36 203.46 1001.03 203.46 C1003.75 203.46 1003.70 202.39 1006.42 202.39 C1009.09 202.39 1009.11 202.39 1011.81 202.39 C1014.50 202.39 1014.53 202.39 1017.19 202.39 C1019.91 202.39 1019.89 201.32 1022.58 201.32 C1025.27 201.32 1025.30 202.39 1027.97 202.39 C1030.69 202.39 1030.66 200.79 1033.35 200.79 C1036.05 200.79 1036.00 201.85 1038.74 202.39 C1041.38 202.92 1044.13 202.93 1044.13 202.93" fill="none" stroke="#33c4cf" stroke-width="1.4" stroke-linejoin="round"/>
<circle cx="650.90" cy="213.61" r="1.0" fill="#33c4cf"/>
<circle cx="656.29" cy="213.61" r="1.0" fill="#33c4cf"/>
<circle cx="661.67" cy="305.00" r="1.0" fill="#33c4cf"/>
<circle cx="667.06" cy="305.00" r="1.0" fill="#33c4cf"/>
<circle cx="672.45" cy="305.00" r="1.0" fill="#33c4cf"/>
<circle cx="677.83" cy="305.00" r="1.0" fill="#33c4cf"/>
<circle cx="683.22" cy="305.00" r="1.0" fill="#33c4cf"/>
<circle cx="688.61" cy="305.00" r="1.0" fill="#33c4cf"/>
<circle cx="693.99" cy="305.00" r="1.0" fill="#33c4cf"/>
<circle cx="699.38" cy="305.00" r="1.0" fill="#33c4cf"/>
<circle cx="704.77" cy="305.00" r="1.0" fill="#33c4cf"/>
<circle cx="710.15" cy="305.00" r="1.0" fill="#33c4cf"/>
<circle cx="715.54" cy="305.00" r="1.0" fill="#33c4cf"/>
<circle cx="720.93" cy="305.00" r="1.0" fill="#33c4cf"/>
<circle cx="726.31" cy="305.00" r="1.0" fill="#33c4cf"/>
<circle cx="731.70" cy="305.00" r="1.0" fill="#33c4cf"/>
<circle cx="737.09" cy="305.00" r="1.0" fill="#33c4cf"/>
<circle cx="742.47" cy="305.00" r="1.0" fill="#33c4cf"/>
<circle cx="747.86" cy="305.00" r="1.0" fill="#33c4cf"/>
<circle cx="753.25" cy="305.00" r="1.0" fill="#33c4cf"/>
<circle cx="758.63" cy="305.00" r="1.0" fill="#33c4cf"/>
<circle cx="764.02" cy="305.00" r="1.0" fill="#33c4cf"/>
<circle cx="769.41" cy="305.00" r="1.0" fill="#33c4cf"/>
<circle cx="774.79" cy="305.00" r="1.0" fill="#33c4cf"/>
<circle cx="780.18" cy="305.00" r="1.0" fill="#33c4cf"/>
<circle cx="785.57" cy="305.00" r="1.0" fill="#33c4cf"/>
<circle cx="790.95" cy="305.00" r="1.0" fill="#33c4cf"/>
<circle cx="796.34" cy="305.00" r="1.0" fill="#33c4cf"/>
<circle cx="801.73" cy="305.00" r="1.0" fill="#33c4cf"/>
<circle cx="807.11" cy="305.00" r="1.0" fill="#33c4cf"/>
<circle cx="812.50" cy="305.00" r="1.0" fill="#33c4cf"/>
<circle cx="817.89" cy="305.00" r="1.0" fill="#33c4cf"/>
<circle cx="823.27" cy="305.00" r="1.0" fill="#33c4cf"/>
<circle cx="828.66" cy="299.39" r="1.0" fill="#33c4cf"/>
<circle cx="834.05" cy="299.39" r="1.0" fill="#33c4cf"/>
<circle cx="839.43" cy="299.39" r="1.0" fill="#33c4cf"/>
<circle cx="844.82" cy="299.39" r="1.0" fill="#33c4cf"/>
<circle cx="850.21" cy="299.39" r="1.0" fill="#33c4cf"/>
<circle cx="855.59" cy="299.39" r="1.0" fill="#33c4cf"/>
<circle cx="860.98" cy="299.39" r="1.0" fill="#33c4cf"/>
<circle cx="866.37" cy="299.39" r="1.0" fill="#33c4cf"/>
<circle cx="871.75" cy="299.39" r="1.0" fill="#33c4cf"/>
<circle cx="877.14" cy="299.39" r="1.0" fill="#33c4cf"/>
<circle cx="882.53" cy="299.39" r="1.0" fill="#33c4cf"/>
<circle cx="887.91" cy="299.39" r="1.0" fill="#33c4cf"/>
<circle cx="893.30" cy="299.39" r="1.0" fill="#33c4cf"/>
<circle cx="898.69" cy="299.39" r="1.0" fill="#33c4cf"/>
<circle cx="904.07" cy="299.39" r="1.0" fill="#33c4cf"/>
<circle cx="909.46" cy="299.39" r="1.0" fill="#33c4cf"/>
<circle cx="914.85" cy="299.39" r="1.0" fill="#33c4cf"/>
<circle cx="920.23" cy="299.39" r="1.0" fill="#33c4cf"/>
<circle cx="925.62" cy="210.94" r="1.0" fill="#33c4cf"/>
<circle cx="931.01" cy="212.55" r="1.0" fill="#33c4cf"/>
<circle cx="936.39" cy="212.55" r="1.0" fill="#33c4cf"/>
<circle cx="941.78" cy="212.01" r="1.0" fill="#33c4cf"/>
<circle cx="947.17" cy="212.01" r="1.0" fill="#33c4cf"/>
<circle cx="952.55" cy="212.01" r="1.0" fill="#33c4cf"/>
<circle cx="957.94" cy="212.01" r="1.0" fill="#33c4cf"/>
<circle cx="963.33" cy="212.01" r="1.0" fill="#33c4cf"/>
<circle cx="968.71" cy="212.01" r="1.0" fill="#33c4cf"/>
<circle cx="974.10" cy="202.39" r="1.0" fill="#33c4cf"/>
<circle cx="979.49" cy="201.32" r="1.0" fill="#33c4cf"/>
<circle cx="984.87" cy="202.39" r="1.0" fill="#33c4cf"/>
<circle cx="990.26" cy="202.93" r="1.0" fill="#33c4cf"/>
<circle cx="995.65" cy="202.93" r="1.0" fill="#33c4cf"/>
<circle cx="1001.03" cy="203.46" r="1.0" fill="#33c4cf"/>
<circle cx="1006.42" cy="202.39" r="1.0" fill="#33c4cf"/>
<circle cx="1011.81" cy="202.39" r="1.0" fill="#33c4cf"/>
<circle cx="1017.19" cy="202.39" r="1.0" fill="#33c4cf"/>
<circle cx="1022.58" cy="201.32" r="1.0" fill="#33c4cf"/>
<circle cx="1027.97" cy="202.39" r="1.0" fill="#33c4cf"/>
<circle cx="1033.35" cy="200.79" r="1.0" fill="#33c4cf"/>
<circle cx="1038.74" cy="202.39" r="1.0" fill="#33c4cf"/>
<circle cx="1044.13" cy="202.93" r="1.0" fill="#33c4cf"/>
<circle cx="1054.90" cy="202.93" r="1.0" fill="#33c4cf"/>
<circle cx="1054.90" cy="202.93" r="1.2" fill="#33c4cf"/>
<path d="M650.90 297.73 C650.90 297.73 651.77 270.26 656.29 270.26 C657.16 270.26 660.82 270.26 661.67 270.26 C666.21 270.26 662.53 298.37 667.06 298.37 C667.91 298.37 669.75 298.37 672.45 298.37 C675.14 298.37 675.14 298.37 677.83 298.37 C680.53 298.37 680.53 298.37 683.22 298.37 C685.91 298.37 685.91 298.37 688.61 298.37 C691.30 298.37 691.30 298.37 693.99 298.37 C696.69 298.37 696.69 298.37 699.38 298.37 C702.07 298.37 702.07 298.37 704.77 298.37 C707.46 298.37 709.30 298.37 710.15 298.37 C714.69 298.37 712.85 270.26 715.54 270.26 C718.23 270.26 716.39 298.37 720.93 298.37 C721.78 298.37 723.62 298.37 726.31 298.37 C729.01 298.37 729.01 298.37 731.70 298.37 C734.39 298.37 734.39 298.37 737.09 298.37 C739.78 298.37 739.78 298.37 742.47 298.37 C745.17 298.37 745.17 298.37 747.86 298.37 C750.55 298.37 750.55 298.37 753.25 298.37 C755.94 298.37 755.94 298.37 758.63 298.37 C761.33 298.37 761.33 298.37 764.02 298.37 C766.71 298.37 766.71 298.37 769.41 298.37 C772.10 298.37 772.10 298.37 774.79 298.37 C777.49 298.37 777.49 298.37 780.18 298.37 C782.87 298.37 782.87 298.37 785.57 298.37 C788.26 298.37 788.26 298.37 790.95 298.37 C793.65 298.37 793.65 298.37 796.34 298.37 C799.03 298.37 800.86 298.37 801.73 298.37 C806.24 298.37 804.42 270.96 807.11 270.96 C809.81 270.96 807.98 298.37 812.50 298.37 C813.37 298.37 815.19 298.37 817.89 298.37 C820.58 298.37 820.58 298.37 823.27 298.37 C825.97 298.37 825.97 298.37 828.66 298.37 C831.35 298.37 831.35 298.37 834.05 298.37 C836.74 298.37 836.74 298.37 839.43 298.37 C842.13 298.37 842.13 298.37 844.82 298.37 C847.51 298.37 847.51 298.37 850.21 298.37 C852.90 298.37 852.90 298.37 855.59 298.37 C858.29 298.37 858.29 298.37 860.98 298.37 C863.67 298.37 863.67 298.37 866.37 298.37 C869.06 298.37 869.06 298.37 871.75 298.37 C874.45 298.37 874.45 298.37 877.14 298.37 C879.84 298.37 881.66 298.37 882.53 298.05 C887.05 296.37 883.39 270.26 887.91 270.26 C888.78 270.26 890.61 270.58 893.30 270.58 C895.99 270.58 897.83 270.26 898.69 270.26 C903.22 270.26 899.54 298.37 904.07 298.37 C904.93 298.37 906.77 298.37 909.46 298.37 C912.15 298.37 912.15 298.37 914.85 298.37 C917.54 298.37 917.78 298.37 920.23 298.37 C923.17 298.37 924.93 297.86 925.62 294.84 C930.32 274.29 926.21 256.00 931.01 251.24 C931.60 250.65 933.70 250.65 936.39 250.65 C939.08 250.65 939.16 250.65 941.78 251.02 C944.55 251.42 946.71 252.95 947.17 252.95 C952.09 252.95 949.83 191.70 952.55 191.70 C955.22 191.70 953.00 251.77 957.94 251.77 C958.38 251.77 960.73 251.24 963.33 251.24 C966.12 251.24 966.21 253.48 968.71 253.48 C971.60 253.48 972.50 252.25 974.10 249.42 C977.88 242.74 977.57 234.46 979.49 234.46 C982.96 234.46 980.35 262.78 984.87 262.78 C985.74 262.78 987.54 262.00 990.26 261.55 C992.93 261.11 992.98 261.02 995.65 261.02 C998.37 261.02 1000.59 262.24 1001.03 262.24 C1005.98 262.24 1003.74 200.79 1006.42 200.79 C1009.12 200.79 1006.86 250.67 1011.81 262.78 C1012.24 263.85 1014.51 263.85 1017.19 263.85 C1019.90 263.85 1019.86 263.05 1022.58 262.51 C1025.25 261.98 1025.27 261.71 1027.97 261.71 C1030.65 261.71 1030.66 262.04 1033.35 262.24 C1036.04 262.44 1036.05 262.34 1038.74 262.51 C1041.44 262.69 1044.13 262.94 1044.13 262.94" fill="none" stroke="#dca9f1" stroke-width="1.4" stroke-linejoin="round"/>
<circle cx="650.90" cy="297.73" r="1.0" fill="#dca9f1"/>
<circle cx="656.29" cy="270.26" r="1.0" fill="#dca9f1"/>
<circle cx="661.67" cy="270.26" r="1.0" fill="#dca9f1"/>
<circle cx="667.06" cy="298.37" r="1.0" fill="#dca9f1"/>
<circle cx="672.45" cy="298.37" r="1.0" fill="#dca9f1"/>
<circle cx="677.83" cy="298.37" r="1.0" fill="#dca9f1"/>
<circle cx="683.22" cy="298.37" r="1.0" fill="#dca9f1"/>
<circle cx="688.61" cy="298.37" r="1.0" fill="#dca9f1"/>
<circle cx="693.99" cy="298.37" r="1.0" fill="#dca9f1"/>
<circle cx="699.38" cy="298.37" r="1.0" fill="#dca9f1"/>
<circle cx="704.77" cy="298.37" r="1.0" fill="#dca9f1"/>
<circle cx="710.15" cy="298.37" r="1.0" fill="#dca9f1"/>
<circle cx="715.54" cy="270.26" r="1.0" fill="#dca9f1"/>
<circle cx="720.93" cy="298.37" r="1.0" fill="#dca9f1"/>
<circle cx="726.31" cy="298.37" r="1.0" fill="#dca9f1"/>
<circle cx="731.70" cy="298.37" r="1.0" fill="#dca9f1"/>
<circle cx="737.09" cy="298.37" r="1.0" fill="#dca9f1"/>
<circle cx="742.47" cy="298.37" r="1.0" fill="#dca9f1"/>
<circle cx="747.86" cy="298.37" r="1.0" fill="#dca9f1"/>
<circle cx="753.25" cy="298.37" r="1.0" fill="#dca9f1"/>
<circle cx="758.63" cy="298.37" r="1.0" fill="#dca9f1"/>
<circle cx="764.02" cy="298.37" r="1.0" fill="#dca9f1"/>
<circle cx="769.41" cy="298.37" r="1.0" fill="#dca9f1"/>
<circle cx="774.79" cy="298.37" r="1.0" fill="#dca9f1"/>
<circle cx="780.18" cy="298.37" r="1.0" fill="#dca9f1"/>
<circle cx="785.57" cy="298.37" r="1.0" fill="#dca9f1"/>
<circle cx="790.95" cy="298.37" r="1.0" fill="#dca9f1"/>
<circle cx="796.34" cy="298.37" r="1.0" fill="#dca9f1"/>
<circle cx="801.73" cy="298.37" r="1.0" fill="#dca9f1"/>
<circle cx="807.11" cy="270.96" r="1.0" fill="#dca9f1"/>
<circle cx="812.50" cy="298.37" r="1.0" fill="#dca9f1"/>
<circle cx="817.89" cy="298.37" r="1.0" fill="#dca9f1"/>
<circle cx="823.27" cy="298.37" r="1.0" fill="#dca9f1"/>
<circle cx="828.66" cy="298.37" r="1.0" fill="#dca9f1"/>
<circle cx="834.05" cy="298.37" r="1.0" fill="#dca9f1"/>
<circle cx="839.43" cy="298.37" r="1.0" fill="#dca9f1"/>
<circle cx="844.82" cy="298.37" r="1.0" fill="#dca9f1"/>
<circle cx="850.21" cy="298.37" r="1.0" fill="#dca9f1"/>
<circle cx="855.59" cy="298.37" r="1.0" fill="#dca9f1"/>
<circle cx="860.98" cy="298.37" r="1.0" fill="#dca9f1"/>
<circle cx="866.37" cy="298.37" r="1.0" fill="#dca9f1"/>
<circle cx="871.75" cy="298.37" r="1.0" fill="#dca9f1"/>
<circle cx="877.14" cy="298.37" r="1.0" fill="#dca9f1"/>
<circle cx="882.53" cy="298.05" r="1.0" fill="#dca9f1"/>
<circle cx="887.91" cy="270.26" r="1.0" fill="#dca9f1"/>
<circle cx="893.30" cy="270.58" r="1.0" fill="#dca9f1"/>
<circle cx="898.69" cy="270.26" r="1.0" fill="#dca9f1"/>
<circle cx="904.07" cy="298.37" r="1.0" fill="#dca9f1"/>
<circle cx="909.46" cy="298.37" r="1.0" fill="#dca9f1"/>
<circle cx="914.85" cy="298.37" r="1.0" fill="#dca9f1"/>
<circle cx="920.23" cy="298.37" r="1.0" fill="#dca9f1"/>
<circle cx="925.62" cy="294.84" r="1.0" fill="#dca9f1"/>
<circle cx="931.01" cy="251.24" r="1.0" fill="#dca9f1"/>
<circle cx="936.39" cy="250.65" r="1.0" fill="#dca9f1"/>
<circle cx="941.78" cy="251.02" r="1.0" fill="#dca9f1"/>
<circle cx="947.17" cy="252.95" r="1.0" fill="#dca9f1"/>
<circle cx="952.55" cy="191.70" r="1.0" fill="#dca9f1"/>
<circle cx="957.94" cy="251.77" r="1.0" fill="#dca9f1"/>
<circle cx="963.33" cy="251.24" r="1.0" fill="#dca9f1"/>
<circle cx="968.71" cy="253.48" r="1.0" fill="#dca9f1"/>
<circle cx="974.10" cy="249.42" r="1.0" fill="#dca9f1"/>
<circle cx="979.49" cy="234.46" r="1.0" fill="#dca9f1"/>
<circle cx="984.87" cy="262.78" r="1.0" fill="#dca9f1"/>
<circle cx="990.26" cy="261.55" r="1.0" fill="#dca9f1"/>
<circle cx="995.65" cy="261.02" r="1.0" fill="#dca9f1"/>
<circle cx="1001.03" cy="262.24" r="1.0" fill="#dca9f1"/>
<circle cx="1006.42" cy="200.79" r="1.0" fill="#dca9f1"/>
<circle cx="1011.81" cy="262.78" r="1.0" fill="#dca9f1"/>
<circle cx="1017.19" cy="263.85" r="1.0" fill="#dca9f1"/>
<circle cx="1022.58" cy="262.51" r="1.0" fill="#dca9f1"/>
<circle cx="1027.97" cy="261.71" r="1.0" fill="#dca9f1"/>
<circle cx="1033.35" cy="262.24" r="1.0" fill="#dca9f1"/>
<circle cx="1038.74" cy="262.51" r="1.0" fill="#dca9f1"/>
<circle cx="1044.13" cy="262.94" r="1.0" fill="#dca9f1"/>
<circle cx="1054.90" cy="262.94" r="1.0" fill="#dca9f1"/>
<circle cx="1054.90" cy="262.94" r="1.2" fill="#dca9f1"/>
<path d="M650.90 291.10 C650.90 291.10 652.87 296.40 656.29 300.19 C658.26 302.38 659.52 303.07 661.67 303.07 C664.91 303.07 664.47 295.64 667.06 295.64 C669.85 295.64 670.76 303.93 672.45 303.93 C676.15 303.93 674.58 282.93 677.83 282.93 C679.97 282.93 679.90 289.86 683.22 296.07 C685.29 299.93 685.26 303.07 688.61 303.07 C690.65 303.07 692.00 303.07 693.99 303.07 C697.39 303.07 697.23 299.67 699.38 295.64 C702.62 289.59 702.65 282.93 704.77 282.93 C708.03 282.93 706.09 303.50 710.15 303.50 C711.47 303.50 712.85 299.17 715.54 299.17 C718.23 299.17 718.96 303.50 720.93 303.50 C724.35 303.50 722.74 292.76 726.31 292.76 C728.13 292.76 729.05 295.64 731.70 295.64 C734.43 295.64 735.30 292.38 737.09 292.38 C740.69 292.38 739.48 303.93 742.47 303.93 C744.87 303.93 745.12 295.27 747.86 295.27 C750.50 295.27 749.77 303.50 753.25 303.50 C755.16 303.50 757.46 303.50 758.63 303.07 C762.84 301.55 761.38 284.53 764.02 284.53 C766.77 284.53 766.07 303.93 769.41 303.93 C771.46 303.93 771.18 292.76 774.79 292.76 C776.57 292.76 778.07 293.55 780.18 295.64 C783.46 298.92 782.13 303.50 785.57 303.50 C787.52 303.50 789.74 303.50 790.95 303.07 C795.13 301.60 792.74 285.22 796.34 285.22 C798.13 285.22 799.34 288.80 801.73 292.76 C804.73 297.73 804.10 303.07 807.11 303.07 C809.49 303.07 809.81 295.64 812.50 295.64 C815.19 295.64 814.49 303.07 817.89 303.07 C819.88 303.07 822.04 303.07 823.27 303.07 C827.43 303.07 824.52 285.76 828.66 285.76 C829.91 285.76 831.74 285.76 834.05 286.61 C837.13 287.76 836.34 291.53 839.43 291.53 C841.73 291.53 843.39 291.53 844.82 291.10 C848.78 289.92 846.82 277.15 850.21 277.15 C852.21 277.15 853.09 280.52 855.59 284.16 C858.47 288.33 858.00 292.76 860.98 292.76 C863.38 292.76 863.34 286.61 866.37 286.61 C868.73 286.61 869.31 290.03 871.75 290.03 C874.70 290.03 874.06 284.53 877.14 284.53 C879.45 284.53 879.77 286.61 882.53 286.61 C885.16 286.61 885.88 285.38 887.91 285.38 C891.27 285.38 890.36 292.76 893.30 292.76 C895.74 292.76 895.70 289.69 898.69 287.42 C901.09 285.58 902.01 284.53 904.07 284.53 C907.40 284.53 906.72 292.76 909.46 292.76 C912.10 292.76 911.50 284.96 914.85 284.96 C916.89 284.96 919.84 287.04 920.23 287.04 C925.23 287.04 920.74 249.19 925.62 213.29 C926.13 209.54 928.35 210.55 931.01 207.74 C933.74 204.83 933.20 203.41 936.39 201.86 C938.59 200.79 940.49 200.79 941.78 200.79 C945.88 200.79 945.50 217.36 947.17 217.36 C950.89 217.36 950.24 178.88 952.55 178.88 C955.63 178.88 953.60 230.18 957.94 230.18 C958.99 230.18 959.69 223.64 963.33 218.96 C965.08 216.70 966.53 216.29 968.71 216.29 C971.91 216.29 971.34 223.23 974.10 223.23 C976.73 223.23 977.24 216.82 979.49 216.82 C982.63 216.82 983.12 227.24 984.87 227.24 C988.51 227.24 985.94 203.46 990.26 203.46 C991.33 203.46 993.27 204.36 995.65 206.13 C998.65 208.37 999.70 211.48 1001.03 211.48 C1005.09 211.48 1004.25 189.03 1006.42 189.03 C1009.63 189.03 1007.19 222.70 1011.81 222.70 C1012.58 222.70 1014.66 222.09 1017.19 220.83 C1020.04 219.41 1019.66 217.99 1022.58 217.36 C1025.05 216.82 1026.29 216.82 1027.97 216.82 C1031.68 216.82 1031.51 227.51 1033.35 227.51 C1036.90 227.51 1035.67 205.06 1038.74 205.06 C1041.06 205.06 1044.13 221.63 1044.13 221.63" fill="none" stroke="#b03636" stroke-width="1.5" stroke-linejoin="round"/>
<circle cx="650.90" cy="291.10" r="1.1" fill="#b03636"/>
<circle cx="656.29" cy="300.19" r="1.1" fill="#b03636"/>
<circle cx="661.67" cy="303.07" r="1.1" fill="#b03636"/>
<circle cx="667.06" cy="295.64" r="1.1" fill="#b03636"/>
<circle cx="672.45" cy="303.93" r="1.1" fill="#b03636"/>
<circle cx="677.83" cy="282.93" r="1.1" fill="#b03636"/>
<circle cx="683.22" cy="296.07" r="1.1" fill="#b03636"/>
<circle cx="688.61" cy="303.07" r="1.1" fill="#b03636"/>
<circle cx="693.99" cy="303.07" r="1.1" fill="#b03636"/>
<circle cx="699.38" cy="295.64" r="1.1" fill="#b03636"/>
<circle cx="704.77" cy="282.93" r="1.1" fill="#b03636"/>
<circle cx="710.15" cy="303.50" r="1.1" fill="#b03636"/>
<circle cx="715.54" cy="299.17" r="1.1" fill="#b03636"/>
<circle cx="720.93" cy="303.50" r="1.1" fill="#b03636"/>
<circle cx="726.31" cy="292.76" r="1.1" fill="#b03636"/>
<circle cx="731.70" cy="295.64" r="1.1" fill="#b03636"/>
<circle cx="737.09" cy="292.38" r="1.1" fill="#b03636"/>
<circle cx="742.47" cy="303.93" r="1.1" fill="#b03636"/>
<circle cx="747.86" cy="295.27" r="1.1" fill="#b03636"/>
<circle cx="753.25" cy="303.50" r="1.1" fill="#b03636"/>
<circle cx="758.63" cy="303.07" r="1.1" fill="#b03636"/>
<circle cx="764.02" cy="284.53" r="1.1" fill="#b03636"/>
<circle cx="769.41" cy="303.93" r="1.1" fill="#b03636"/>
<circle cx="774.79" cy="292.76" r="1.1" fill="#b03636"/>
<circle cx="780.18" cy="295.64" r="1.1" fill="#b03636"/>
<circle cx="785.57" cy="303.50" r="1.1" fill="#b03636"/>
<circle cx="790.95" cy="303.07" r="1.1" fill="#b03636"/>
<circle cx="796.34" cy="285.22" r="1.1" fill="#b03636"/>
<circle cx="801.73" cy="292.76" r="1.1" fill="#b03636"/>
<circle cx="807.11" cy="303.07" r="1.1" fill="#b03636"/>
<circle cx="812.50" cy="295.64" r="1.1" fill="#b03636"/>
<circle cx="817.89" cy="303.07" r="1.1" fill="#b03636"/>
<circle cx="823.27" cy="303.07" r="1.1" fill="#b03636"/>
<circle cx="828.66" cy="285.76" r="1.1" fill="#b03636"/>
<circle cx="834.05" cy="286.61" r="1.1" fill="#b03636"/>
<circle cx="839.43" cy="291.53" r="1.1" fill="#b03636"/>
<circle cx="844.82" cy="291.10" r="1.1" fill="#b03636"/>
<circle cx="850.21" cy="277.15" r="1.1" fill="#b03636"/>
<circle cx="855.59" cy="284.16" r="1.1" fill="#b03636"/>
<circle cx="860.98" cy="292.76" r="1.1" fill="#b03636"/>
<circle cx="866.37" cy="286.61" r="1.1" fill="#b03636"/>
<circle cx="871.75" cy="290.03" r="1.1" fill="#b03636"/>
<circle cx="877.14" cy="284.53" r="1.1" fill="#b03636"/>
<circle cx="882.53" cy="286.61" r="1.1" fill="#b03636"/>
<circle cx="887.91" cy="285.38" r="1.1" fill="#b03636"/>
<circle cx="893.30" cy="292.76" r="1.1" fill="#b03636"/>
<circle cx="898.69" cy="287.42" r="1.1" fill="#b03636"/>
<circle cx="904.07" cy="284.53" r="1.1" fill="#b03636"/>
<circle cx="909.46" cy="292.76" r="1.1" fill="#b03636"/>
<circle cx="914.85" cy="284.96" r="1.1" fill="#b03636"/>
<circle cx="920.23" cy="287.04" r="1.1" fill="#b03636"/>
<circle cx="925.62" cy="213.29" r="1.1" fill="#b03636"/>
<circle cx="931.01" cy="207.74" r="1.1" fill="#b03636"/>
<circle cx="936.39" cy="201.86" r="1.1" fill="#b03636"/>
<circle cx="941.78" cy="200.79" r="1.1" fill="#b03636"/>
<circle cx="947.17" cy="217.36" r="1.1" fill="#b03636"/>
<circle cx="952.55" cy="178.88" r="1.1" fill="#b03636"/>
<circle cx="957.94" cy="230.18" r="1.1" fill="#b03636"/>
<circle cx="963.33" cy="218.96" r="1.1" fill="#b03636"/>
<circle cx="968.71" cy="216.29" r="1.1" fill="#b03636"/>
<circle cx="974.10" cy="223.23" r="1.1" fill="#b03636"/>
<circle cx="979.49" cy="216.82" r="1.1" fill="#b03636"/>
<circle cx="984.87" cy="227.24" r="1.1" fill="#b03636"/>
<circle cx="990.26" cy="203.46" r="1.1" fill="#b03636"/>
<circle cx="995.65" cy="206.13" r="1.1" fill="#b03636"/>
<circle cx="1001.03" cy="211.48" r="1.1" fill="#b03636"/>
<circle cx="1006.42" cy="189.03" r="1.1" fill="#b03636"/>
<circle cx="1011.81" cy="222.70" r="1.1" fill="#b03636"/>
<circle cx="1017.19" cy="220.83" r="1.1" fill="#b03636"/>
<circle cx="1022.58" cy="217.36" r="1.1" fill="#b03636"/>
<circle cx="1027.97" cy="216.82" r="1.1" fill="#b03636"/>
<circle cx="1033.35" cy="227.51" r="1.1" fill="#b03636"/>
<circle cx="1038.74" cy="205.06" r="1.1" fill="#b03636"/>
<circle cx="1044.13" cy="221.63" r="1.1" fill="#b03636"/>
<circle cx="1054.90" cy="227.72" r="1.1" fill="#b03636"/>
<circle cx="1054.90" cy="227.72" r="1.3" fill="#b03636"/>
<line x1="768.1" y1="332.5" x2="784.1" y2="332.5" stroke="#33c4cf" stroke-width="1.2" opacity="0.65"/><circle cx="776.1" cy="332.5" r="3.6" fill="#33c4cf"/><line x1="820.8" y1="332.5" x2="836.8" y2="332.5" stroke="#dca9f1" stroke-width="1.2" opacity="0.65"/><circle cx="828.8" cy="332.5" r="3.6" fill="#dca9f1"/><line x1="872.8" y1="332.5" x2="888.8" y2="332.5" stroke="#b03636" stroke-width="1.2" opacity="0.65"/><circle cx="880.8" cy="332.5" r="3.6" fill="#b03636"/>
<line x1="196.00" y1="389.50" x2="596.00" y2="389.50" stroke="#9c9c9c" stroke-width="1" stroke-dasharray="2 2"/>
<text x="190.00" y="391.50" text-anchor="end" class="al" textLength="4.23" lengthAdjust="spacingAndGlyphs">1</text>
<line x1="196.00" y1="418.52" x2="596.00" y2="418.52" stroke="#9c9c9c" stroke-width="1" stroke-dasharray="2 2"/>
<text x="190.00" y="420.52" text-anchor="end" class="al" textLength="10.56" lengthAdjust="spacingAndGlyphs">0.8</text>
<line x1="196.00" y1="447.54" x2="596.00" y2="447.54" stroke="#9c9c9c" stroke-width="1" stroke-dasharray="2 2"/>
<text x="190.00" y="449.54" text-anchor="end" class="al" textLength="10.56" lengthAdjust="spacingAndGlyphs">0.6</text>
<line x1="196.00" y1="476.56" x2="596.00" y2="476.56" stroke="#9c9c9c" stroke-width="1" stroke-dasharray="2 2"/>
<text x="190.00" y="478.56" text-anchor="end" class="al" textLength="10.56" lengthAdjust="spacingAndGlyphs">0.4</text>
<line x1="196.00" y1="505.58" x2="596.00" y2="505.58" stroke="#9c9c9c" stroke-width="1" stroke-dasharray="2 2"/>
<text x="190.00" y="507.58" text-anchor="end" class="al" textLength="10.56" lengthAdjust="spacingAndGlyphs">0.2</text>
<text x="190.00" y="536.60" text-anchor="end" class="al" textLength="4.23" lengthAdjust="spacingAndGlyphs">0</text>
<line x1="195.00" y1="389.50" x2="195.00" y2="534.60" stroke="#4d5770" stroke-width="1.6"/>
<line x1="195.00" y1="534.60" x2="596.00" y2="534.60" stroke="#4d5770" stroke-width="1.6"/>
<text x="195.00" y="545.00" text-anchor="middle" class="al" textLength="19.02" lengthAdjust="spacingAndGlyphs">00:00</text>
<text x="221.73" y="545.00" text-anchor="middle" class="al" textLength="19.02" lengthAdjust="spacingAndGlyphs">01:15</text>
<text x="248.47" y="545.00" text-anchor="middle" class="al" textLength="19.02" lengthAdjust="spacingAndGlyphs">02:30</text>
<text x="275.20" y="545.00" text-anchor="middle" class="al" textLength="19.02" lengthAdjust="spacingAndGlyphs">03:45</text>
<text x="301.93" y="545.00" text-anchor="middle" class="al" textLength="19.02" lengthAdjust="spacingAndGlyphs">05:00</text>
<text x="328.67" y="545.00" text-anchor="middle" class="al" textLength="19.02" lengthAdjust="spacingAndGlyphs">06:15</text>
<text x="355.40" y="545.00" text-anchor="middle" class="al" textLength="19.02" lengthAdjust="spacingAndGlyphs">07:30</text>
<text x="382.13" y="545.00" text-anchor="middle" class="al" textLength="19.02" lengthAdjust="spacingAndGlyphs">08:45</text>
<text x="408.87" y="545.00" text-anchor="middle" class="al" textLength="19.02" lengthAdjust="spacingAndGlyphs">10:00</text>
<text x="435.60" y="545.00" text-anchor="middle" class="al" textLength="19.02" lengthAdjust="spacingAndGlyphs">11:15</text>
<text x="462.33" y="545.00" text-anchor="middle" class="al" textLength="19.02" lengthAdjust="spacingAndGlyphs">12:30</text>
<text x="489.07" y="545.00" text-anchor="middle" class="al" textLength="19.02" lengthAdjust="spacingAndGlyphs">13:45</text>
<text x="515.80" y="545.00" text-anchor="middle" class="al" textLength="19.02" lengthAdjust="spacingAndGlyphs">15:00</text>
<text x="542.53" y="545.00" text-anchor="middle" class="al" textLength="19.02" lengthAdjust="spacingAndGlyphs">16:15</text>
<text x="569.27" y="545.00" text-anchor="middle" class="al" textLength="19.02" lengthAdjust="spacingAndGlyphs">17:30</text>
<text x="596.00" y="545.00" text-anchor="middle" class="al" textLength="19.02" lengthAdjust="spacingAndGlyphs">18:37</text>
<path d="M195.00 534.60 L200.35 534.60 L205.69 534.60 L211.04 534.60 L216.39 534.60 L221.73 534.60 L227.08 534.60 L232.43 534.60 L237.77 534.60 L243.12 534.60 L248.47 534.60 L253.81 534.60 L259.16 534.60 L264.51 534.60 L269.85 534.60 L275.20 534.60 L280.55 534.60 L285.89 534.60 L291.24 534.60 L296.59 534.60 L301.93 534.60 L307.28 534.60 L312.63 534.60 L317.97 534.60 L323.32 534.60 L328.67 534.60 L334.01 534.60 L339.36 534.60 L344.71 534.60 L350.05 534.60 L355.40 534.60 L360.75 534.60 L366.09 534.60 L371.44 534.60 L376.79 534.60 L382.13 534.60 L387.48 534.60 L392.83 534.60 L398.17 534.60 L403.52 534.60 L408.87 534.60 L414.21 534.60 L419.56 534.60 L424.91 534.60 L430.25 534.60 L435.60 534.60 L440.95 534.60 L446.29 534.60 L451.64 534.60 L456.99 534.60 L462.33 534.60 L467.68 534.60 L473.03 534.60 L478.37 534.60 L483.72 534.60 L489.07 534.60 L494.41 534.60 L499.76 534.60 L505.11 534.60 L510.45 534.60 L515.80 534.60 L521.15 534.60 L526.49 534.60 L531.84 534.60 L537.19 534.60 L542.53 534.60 L547.88 534.60 L553.23 534.60 L558.57 534.60 L563.92 534.60 L569.27 534.60 L574.61 534.60 L579.96 534.60 L585.31 534.60" fill="none" stroke="#5a85de" stroke-width="1.3" stroke-linejoin="round"/>
<circle cx="195.00" cy="534.60" r="1.1" fill="#5a85de"/>
<circle cx="200.35" cy="534.60" r="1.1" fill="#5a85de"/>
<circle cx="205.69" cy="534.60" r="1.1" fill="#5a85de"/>
<circle cx="211.04" cy="534.60" r="1.1" fill="#5a85de"/>
<circle cx="216.39" cy="534.60" r="1.1" fill="#5a85de"/>
<circle cx="221.73" cy="534.60" r="1.1" fill="#5a85de"/>
<circle cx="227.08" cy="534.60" r="1.1" fill="#5a85de"/>
<circle cx="232.43" cy="534.60" r="1.1" fill="#5a85de"/>
<circle cx="237.77" cy="534.60" r="1.1" fill="#5a85de"/>
<circle cx="243.12" cy="534.60" r="1.1" fill="#5a85de"/>
<circle cx="248.47" cy="534.60" r="1.1" fill="#5a85de"/>
<circle cx="253.81" cy="534.60" r="1.1" fill="#5a85de"/>
<circle cx="259.16" cy="534.60" r="1.1" fill="#5a85de"/>
<circle cx="264.51" cy="534.60" r="1.1" fill="#5a85de"/>
<circle cx="269.85" cy="534.60" r="1.1" fill="#5a85de"/>
<circle cx="275.20" cy="534.60" r="1.1" fill="#5a85de"/>
<circle cx="280.55" cy="534.60" r="1.1" fill="#5a85de"/>
<circle cx="285.89" cy="534.60" r="1.1" fill="#5a85de"/>
<circle cx="291.24" cy="534.60" r="1.1" fill="#5a85de"/>
<circle cx="296.59" cy="534.60" r="1.1" fill="#5a85de"/>
<circle cx="301.93" cy="534.60" r="1.1" fill="#5a85de"/>
<circle cx="307.28" cy="534.60" r="1.1" fill="#5a85de"/>
<circle cx="312.63" cy="534.60" r="1.1" fill="#5a85de"/>
<circle cx="317.97" cy="534.60" r="1.1" fill="#5a85de"/>
<circle cx="323.32" cy="534.60" r="1.1" fill="#5a85de"/>
<circle cx="328.67" cy="534.60" r="1.1" fill="#5a85de"/>
<circle cx="334.01" cy="534.60" r="1.1" fill="#5a85de"/>
<circle cx="339.36" cy="534.60" r="1.1" fill="#5a85de"/>
<circle cx="344.71" cy="534.60" r="1.1" fill="#5a85de"/>
<circle cx="350.05" cy="534.60" r="1.1" fill="#5a85de"/>
<circle cx="355.40" cy="534.60" r="1.1" fill="#5a85de"/>
<circle cx="360.75" cy="534.60" r="1.1" fill="#5a85de"/>
<circle cx="366.09" cy="534.60" r="1.1" fill="#5a85de"/>
<circle cx="371.44" cy="534.60" r="1.1" fill="#5a85de"/>
<circle cx="376.79" cy="534.60" r="1.1" fill="#5a85de"/>
<circle cx="382.13" cy="534.60" r="1.1" fill="#5a85de"/>
<circle cx="387.48" cy="534.60" r="1.1" fill="#5a85de"/>
<circle cx="392.83" cy="534.60" r="1.1" fill="#5a85de"/>
<circle cx="398.17" cy="534.60" r="1.1" fill="#5a85de"/>
<circle cx="403.52" cy="534.60" r="1.1" fill="#5a85de"/>
<circle cx="408.87" cy="534.60" r="1.1" fill="#5a85de"/>
<circle cx="414.21" cy="534.60" r="1.1" fill="#5a85de"/>
<circle cx="419.56" cy="534.60" r="1.1" fill="#5a85de"/>
<circle cx="424.91" cy="534.60" r="1.1" fill="#5a85de"/>
<circle cx="430.25" cy="534.60" r="1.1" fill="#5a85de"/>
<circle cx="435.60" cy="534.60" r="1.1" fill="#5a85de"/>
<circle cx="440.95" cy="534.60" r="1.1" fill="#5a85de"/>
<circle cx="446.29" cy="534.60" r="1.1" fill="#5a85de"/>
<circle cx="451.64" cy="534.60" r="1.1" fill="#5a85de"/>
<circle cx="456.99" cy="534.60" r="1.1" fill="#5a85de"/>
<circle cx="462.33" cy="534.60" r="1.1" fill="#5a85de"/>
<circle cx="467.68" cy="534.60" r="1.1" fill="#5a85de"/>
<circle cx="473.03" cy="534.60" r="1.1" fill="#5a85de"/>
<circle cx="478.37" cy="534.60" r="1.1" fill="#5a85de"/>
<circle cx="483.72" cy="534.60" r="1.1" fill="#5a85de"/>
<circle cx="489.07" cy="534.60" r="1.1" fill="#5a85de"/>
<circle cx="494.41" cy="534.60" r="1.1" fill="#5a85de"/>
<circle cx="499.76" cy="534.60" r="1.1" fill="#5a85de"/>
<circle cx="505.11" cy="534.60" r="1.1" fill="#5a85de"/>
<circle cx="510.45" cy="534.60" r="1.1" fill="#5a85de"/>
<circle cx="515.80" cy="534.60" r="1.1" fill="#5a85de"/>
<circle cx="521.15" cy="534.60" r="1.1" fill="#5a85de"/>
<circle cx="526.49" cy="534.60" r="1.1" fill="#5a85de"/>
<circle cx="531.84" cy="534.60" r="1.1" fill="#5a85de"/>
<circle cx="537.19" cy="534.60" r="1.1" fill="#5a85de"/>
<circle cx="542.53" cy="534.60" r="1.1" fill="#5a85de"/>
<circle cx="547.88" cy="534.60" r="1.1" fill="#5a85de"/>
<circle cx="553.23" cy="534.60" r="1.1" fill="#5a85de"/>
<circle cx="558.57" cy="534.60" r="1.1" fill="#5a85de"/>
<circle cx="563.92" cy="534.60" r="1.1" fill="#5a85de"/>
<circle cx="569.27" cy="534.60" r="1.1" fill="#5a85de"/>
<circle cx="574.61" cy="534.60" r="1.1" fill="#5a85de"/>
<circle cx="579.96" cy="534.60" r="1.1" fill="#5a85de"/>
<circle cx="585.31" cy="534.60" r="1.1" fill="#5a85de"/>
<circle cx="596.00" cy="534.60" r="1.1" fill="#5a85de"/>
<circle cx="596.00" cy="534.60" r="1.3" fill="#5a85de"/>
<line x1="346.0" y1="561.8" x2="362.0" y2="561.8" stroke="#5a85de" stroke-width="1.2" opacity="0.65"/><circle cx="354.0" cy="561.8" r="3.6" fill="#5a85de"/>
<line x1="656.30" y1="389.30" x2="1054.30" y2="389.30" stroke="#9c9c9c" stroke-width="1" stroke-dasharray="2 2"/>
<text x="650.30" y="391.30" text-anchor="end" class="al" textLength="12.68" lengthAdjust="spacingAndGlyphs">180</text>
<line x1="656.30" y1="413.50" x2="1054.30" y2="413.50" stroke="#9c9c9c" stroke-width="1" stroke-dasharray="2 2"/>
<text x="650.30" y="415.50" text-anchor="end" class="al" textLength="12.68" lengthAdjust="spacingAndGlyphs">150</text>
<line x1="656.30" y1="437.70" x2="1054.30" y2="437.70" stroke="#9c9c9c" stroke-width="1" stroke-dasharray="2 2"/>
<text x="650.30" y="439.70" text-anchor="end" class="al" textLength="12.68" lengthAdjust="spacingAndGlyphs">120</text>
<line x1="656.30" y1="461.90" x2="1054.30" y2="461.90" stroke="#9c9c9c" stroke-width="1" stroke-dasharray="2 2"/>
<text x="650.30" y="463.90" text-anchor="end" class="al" textLength="8.45" lengthAdjust="spacingAndGlyphs">90</text>
<line x1="656.30" y1="486.10" x2="1054.30" y2="486.10" stroke="#9c9c9c" stroke-width="1" stroke-dasharray="2 2"/>
<text x="650.30" y="488.10" text-anchor="end" class="al" textLength="8.45" lengthAdjust="spacingAndGlyphs">60</text>
<line x1="656.30" y1="510.30" x2="1054.30" y2="510.30" stroke="#9c9c9c" stroke-width="1" stroke-dasharray="2 2"/>
<text x="650.30" y="512.30" text-anchor="end" class="al" textLength="8.45" lengthAdjust="spacingAndGlyphs">30</text>
<text x="650.30" y="536.50" text-anchor="end" class="al" textLength="4.23" lengthAdjust="spacingAndGlyphs">0</text>
<line x1="655.30" y1="389.30" x2="655.30" y2="534.50" stroke="#4d5770" stroke-width="1.6"/>
<line x1="655.30" y1="534.50" x2="1054.30" y2="534.50" stroke="#4d5770" stroke-width="1.6"/>
<text x="655.30" y="545.00" text-anchor="middle" class="al" textLength="19.02" lengthAdjust="spacingAndGlyphs">00:00</text>
<text x="681.90" y="545.00" text-anchor="middle" class="al" textLength="19.02" lengthAdjust="spacingAndGlyphs">01:15</text>
<text x="708.50" y="545.00" text-anchor="middle" class="al" textLength="19.02" lengthAdjust="spacingAndGlyphs">02:30</text>
<text x="735.10" y="545.00" text-anchor="middle" class="al" textLength="19.02" lengthAdjust="spacingAndGlyphs">03:45</text>
<text x="761.70" y="545.00" text-anchor="middle" class="al" textLength="19.02" lengthAdjust="spacingAndGlyphs">05:00</text>
<text x="788.30" y="545.00" text-anchor="middle" class="al" textLength="19.02" lengthAdjust="spacingAndGlyphs">06:15</text>
<text x="814.90" y="545.00" text-anchor="middle" class="al" textLength="19.02" lengthAdjust="spacingAndGlyphs">07:30</text>
<text x="841.50" y="545.00" text-anchor="middle" class="al" textLength="19.02" lengthAdjust="spacingAndGlyphs">08:45</text>
<text x="868.10" y="545.00" text-anchor="middle" class="al" textLength="19.02" lengthAdjust="spacingAndGlyphs">10:00</text>
<text x="894.70" y="545.00" text-anchor="middle" class="al" textLength="19.02" lengthAdjust="spacingAndGlyphs">11:15</text>
<text x="921.30" y="545.00" text-anchor="middle" class="al" textLength="19.02" lengthAdjust="spacingAndGlyphs">12:30</text>
<text x="947.90" y="545.00" text-anchor="middle" class="al" textLength="19.02" lengthAdjust="spacingAndGlyphs">13:45</text>
<text x="974.50" y="545.00" text-anchor="middle" class="al" textLength="19.02" lengthAdjust="spacingAndGlyphs">15:00</text>
<text x="1001.10" y="545.00" text-anchor="middle" class="al" textLength="19.02" lengthAdjust="spacingAndGlyphs">16:15</text>
<text x="1027.70" y="545.00" text-anchor="middle" class="al" textLength="19.02" lengthAdjust="spacingAndGlyphs">17:30</text>
<text x="1054.30" y="545.00" text-anchor="middle" class="al" textLength="19.02" lengthAdjust="spacingAndGlyphs">18:37</text>
<line x1="657.30" y1="510.30" x2="1046.30" y2="510.30" stroke="#d98a8a" stroke-width="1.2" stroke-dasharray="2.5 2.5"/>
<line x1="657.30" y1="522.40" x2="1046.30" y2="522.40" stroke="#eac75a" stroke-width="1.2" stroke-dasharray="2.5 2.5"/>
<path d="M1045.30 507.10 L1054.30 510.30 L1045.30 513.50 L1047.80 510.30 Z" fill="#e56a6a"/>
<path d="M1045.30 519.20 L1054.30 522.40 L1045.30 525.60 L1047.80 522.40 Z" fill="#ecb52c"/>
<circle cx="655.30" cy="510.30" r="2.3" fill="#e56a6a"/>
<circle cx="655.30" cy="522.40" r="2.3" fill="#ecb52c"/>
<text x="855" y="505.6" text-anchor="middle" class="ml" fill="#cf7b7b">严重三相不平衡</text>
<text x="854.6" y="517.6" text-anchor="middle" class="ml" fill="#e9c24a">三相不平衡</text>
<path d="M655.30 423.74 C655.30 423.74 658.88 448.19 660.62 448.19 C664.20 448.19 664.03 397.12 665.94 397.12 C669.35 397.12 667.73 488.52 671.26 488.52 C673.05 488.52 671.83 455.97 676.58 442.54 C677.15 440.93 681.34 440.93 681.90 440.93 C686.66 440.93 683.75 488.28 687.22 488.28 C689.07 488.28 688.16 463.51 692.54 463.51 C693.48 463.51 696.60 463.51 697.86 464.72 C701.92 468.63 701.68 481.50 703.18 481.50 C707.00 481.50 705.22 437.14 708.50 437.14 C710.54 437.14 711.92 464.40 713.82 464.40 C717.24 464.40 716.49 414.87 719.14 414.87 C721.81 414.87 719.93 440.54 724.46 464.72 C725.25 468.97 727.43 468.03 729.78 471.74 C732.75 476.42 733.00 481.50 735.10 481.50 C738.32 481.50 736.40 469.61 740.42 465.37 C741.72 464.00 744.51 464.00 745.74 464.00 C749.83 464.00 748.40 481.50 751.06 481.50 C753.72 481.50 752.26 464.00 756.38 464.00 C757.58 464.00 760.54 464.00 761.70 464.00 C765.86 464.00 764.36 445.69 767.02 445.69 C769.68 445.69 768.78 455.27 772.34 464.00 C774.10 468.30 775.15 467.77 777.66 471.74 C780.47 476.20 780.99 480.86 782.98 480.86 C786.31 480.86 784.21 464.00 788.30 464.00 C789.53 464.00 792.24 464.00 793.62 464.00 C797.56 464.00 796.76 449.80 798.94 449.80 C802.08 449.80 803.05 471.02 804.26 471.02 C808.37 471.02 807.08 396.56 809.58 396.56 C812.40 396.56 810.53 480.86 814.90 480.86 C815.85 480.86 816.09 463.27 820.22 463.27 C821.41 463.27 824.10 463.27 825.54 463.27 C829.42 463.27 827.11 470.90 830.86 476.58 C832.43 478.97 834.70 476.97 836.18 479.40 C840.02 485.76 837.53 492.28 841.50 494.17 C842.85 494.81 846.22 494.81 846.82 494.81 C851.54 494.81 848.45 453.35 852.14 453.35 C853.77 453.35 855.24 462.07 857.46 471.02 C860.56 483.53 859.81 496.26 862.78 496.26 C865.13 496.26 864.86 476.58 868.10 476.58 C870.18 476.58 871.35 488.52 873.42 488.52 C876.67 488.52 875.12 468.76 878.74 468.76 C880.44 468.76 880.64 476.74 884.06 476.74 C885.96 476.74 888.12 476.74 889.38 476.74 C893.44 476.74 891.67 460.45 894.70 460.45 C896.99 460.45 896.40 467.26 900.02 472.31 C901.72 474.68 904.27 472.61 905.34 475.29 C909.59 485.96 908.32 499.01 910.66 499.01 C913.64 499.01 911.93 468.60 915.98 468.60 C917.25 468.60 919.75 472.20 921.30 476.74 C925.07 487.81 923.69 488.35 926.62 499.81 C929.01 509.16 927.85 518.37 931.94 518.37 C933.17 518.37 934.54 517.06 937.26 516.11 C939.86 515.20 940.22 514.66 942.58 514.66 C945.54 514.66 945.33 516.77 947.90 519.09 C950.65 521.57 951.22 524.26 953.22 524.26 C956.54 524.26 955.30 513.12 958.54 513.12 C960.62 513.12 960.70 517.59 963.86 519.01 C966.02 519.98 967.08 519.98 969.18 519.98 C972.40 519.98 971.84 513.61 974.50 513.61 C977.16 513.61 978.08 519.98 979.82 519.98 C983.40 519.98 982.07 503.69 985.14 503.69 C987.39 503.69 986.74 515.06 990.46 515.06 C992.06 515.06 993.15 514.69 995.78 514.09 C998.47 513.48 999.81 512.64 1001.10 512.64 C1005.13 512.64 1004.14 528.93 1006.42 528.93 C1009.46 528.93 1007.45 506.67 1011.74 506.67 C1012.77 506.67 1014.36 507.61 1017.06 508.12 C1019.68 508.62 1019.73 508.31 1022.38 508.69 C1025.05 509.07 1025.55 509.65 1027.70 509.65 C1030.87 509.65 1030.91 503.69 1033.02 503.69 C1036.23 503.69 1035.19 514.58 1038.34 514.58 C1040.51 514.58 1043.66 508.12 1043.66 508.12" fill="none" stroke="#5a85de" stroke-width="1.5" stroke-linejoin="round"/>
<circle cx="655.30" cy="423.74" r="1.0" fill="#5a85de"/>
<circle cx="660.62" cy="448.19" r="1.0" fill="#5a85de"/>
<circle cx="665.94" cy="397.12" r="1.0" fill="#5a85de"/>
<circle cx="671.26" cy="488.52" r="1.0" fill="#5a85de"/>
<circle cx="676.58" cy="442.54" r="1.0" fill="#5a85de"/>
<circle cx="681.90" cy="440.93" r="1.0" fill="#5a85de"/>
<circle cx="687.22" cy="488.28" r="1.0" fill="#5a85de"/>
<circle cx="692.54" cy="463.51" r="1.0" fill="#5a85de"/>
<circle cx="697.86" cy="464.72" r="1.0" fill="#5a85de"/>
<circle cx="703.18" cy="481.50" r="1.0" fill="#5a85de"/>
<circle cx="708.50" cy="437.14" r="1.0" fill="#5a85de"/>
<circle cx="713.82" cy="464.40" r="1.0" fill="#5a85de"/>
<circle cx="719.14" cy="414.87" r="1.0" fill="#5a85de"/>
<circle cx="724.46" cy="464.72" r="1.0" fill="#5a85de"/>
<circle cx="729.78" cy="471.74" r="1.0" fill="#5a85de"/>
<circle cx="735.10" cy="481.50" r="1.0" fill="#5a85de"/>
<circle cx="740.42" cy="465.37" r="1.0" fill="#5a85de"/>
<circle cx="745.74" cy="464.00" r="1.0" fill="#5a85de"/>
<circle cx="751.06" cy="481.50" r="1.0" fill="#5a85de"/>
<circle cx="756.38" cy="464.00" r="1.0" fill="#5a85de"/>
<circle cx="761.70" cy="464.00" r="1.0" fill="#5a85de"/>
<circle cx="767.02" cy="445.69" r="1.0" fill="#5a85de"/>
<circle cx="772.34" cy="464.00" r="1.0" fill="#5a85de"/>
<circle cx="777.66" cy="471.74" r="1.0" fill="#5a85de"/>
<circle cx="782.98" cy="480.86" r="1.0" fill="#5a85de"/>
<circle cx="788.30" cy="464.00" r="1.0" fill="#5a85de"/>
<circle cx="793.62" cy="464.00" r="1.0" fill="#5a85de"/>
<circle cx="798.94" cy="449.80" r="1.0" fill="#5a85de"/>
<circle cx="804.26" cy="471.02" r="1.0" fill="#5a85de"/>
<circle cx="809.58" cy="396.56" r="1.0" fill="#5a85de"/>
<circle cx="814.90" cy="480.86" r="1.0" fill="#5a85de"/>
<circle cx="820.22" cy="463.27" r="1.0" fill="#5a85de"/>
<circle cx="825.54" cy="463.27" r="1.0" fill="#5a85de"/>
<circle cx="830.86" cy="476.58" r="1.0" fill="#5a85de"/>
<circle cx="836.18" cy="479.40" r="1.0" fill="#5a85de"/>
<circle cx="841.50" cy="494.17" r="1.0" fill="#5a85de"/>
<circle cx="846.82" cy="494.81" r="1.0" fill="#5a85de"/>
<circle cx="852.14" cy="453.35" r="1.0" fill="#5a85de"/>
<circle cx="857.46" cy="471.02" r="1.0" fill="#5a85de"/>
<circle cx="862.78" cy="496.26" r="1.0" fill="#5a85de"/>
<circle cx="868.10" cy="476.58" r="1.0" fill="#5a85de"/>
<circle cx="873.42" cy="488.52" r="1.0" fill="#5a85de"/>
<circle cx="878.74" cy="468.76" r="1.0" fill="#5a85de"/>
<circle cx="884.06" cy="476.74" r="1.0" fill="#5a85de"/>
<circle cx="889.38" cy="476.74" r="1.0" fill="#5a85de"/>
<circle cx="894.70" cy="460.45" r="1.0" fill="#5a85de"/>
<circle cx="900.02" cy="472.31" r="1.0" fill="#5a85de"/>
<circle cx="905.34" cy="475.29" r="1.0" fill="#5a85de"/>
<circle cx="910.66" cy="499.01" r="1.0" fill="#5a85de"/>
<circle cx="915.98" cy="468.60" r="1.0" fill="#5a85de"/>
<circle cx="921.30" cy="476.74" r="1.0" fill="#5a85de"/>
<circle cx="926.62" cy="499.81" r="1.0" fill="#5a85de"/>
<circle cx="931.94" cy="518.37" r="1.0" fill="#5a85de"/>
<circle cx="937.26" cy="516.11" r="1.0" fill="#5a85de"/>
<circle cx="942.58" cy="514.66" r="1.0" fill="#5a85de"/>
<circle cx="947.90" cy="519.09" r="1.0" fill="#5a85de"/>
<circle cx="953.22" cy="524.26" r="1.0" fill="#5a85de"/>
<circle cx="958.54" cy="513.12" r="1.0" fill="#5a85de"/>
<circle cx="963.86" cy="519.01" r="1.0" fill="#5a85de"/>
<circle cx="969.18" cy="519.98" r="1.0" fill="#5a85de"/>
<circle cx="974.50" cy="513.61" r="1.0" fill="#5a85de"/>
<circle cx="979.82" cy="519.98" r="1.0" fill="#5a85de"/>
<circle cx="985.14" cy="503.69" r="1.0" fill="#5a85de"/>
<circle cx="990.46" cy="515.06" r="1.0" fill="#5a85de"/>
<circle cx="995.78" cy="514.09" r="1.0" fill="#5a85de"/>
<circle cx="1001.10" cy="512.64" r="1.0" fill="#5a85de"/>
<circle cx="1006.42" cy="528.93" r="1.0" fill="#5a85de"/>
<circle cx="1011.74" cy="506.67" r="1.0" fill="#5a85de"/>
<circle cx="1017.06" cy="508.12" r="1.0" fill="#5a85de"/>
<circle cx="1022.38" cy="508.69" r="1.0" fill="#5a85de"/>
<circle cx="1027.70" cy="509.65" r="1.0" fill="#5a85de"/>
<circle cx="1033.02" cy="503.69" r="1.0" fill="#5a85de"/>
<circle cx="1038.34" cy="514.58" r="1.0" fill="#5a85de"/>
<circle cx="1043.66" cy="508.12" r="1.0" fill="#5a85de"/>
<circle cx="1054.30" cy="504.65" r="1.0" fill="#5a85de"/>
<circle cx="1054.30" cy="504.65" r="1.2" fill="#5a85de"/>
<line x1="804.0" y1="561.8" x2="820.0" y2="561.8" stroke="#5a85de" stroke-width="1.2" opacity="0.65"/><circle cx="812.0" cy="561.8" r="3.6" fill="#5a85de"/>
</svg>
</body></html>
